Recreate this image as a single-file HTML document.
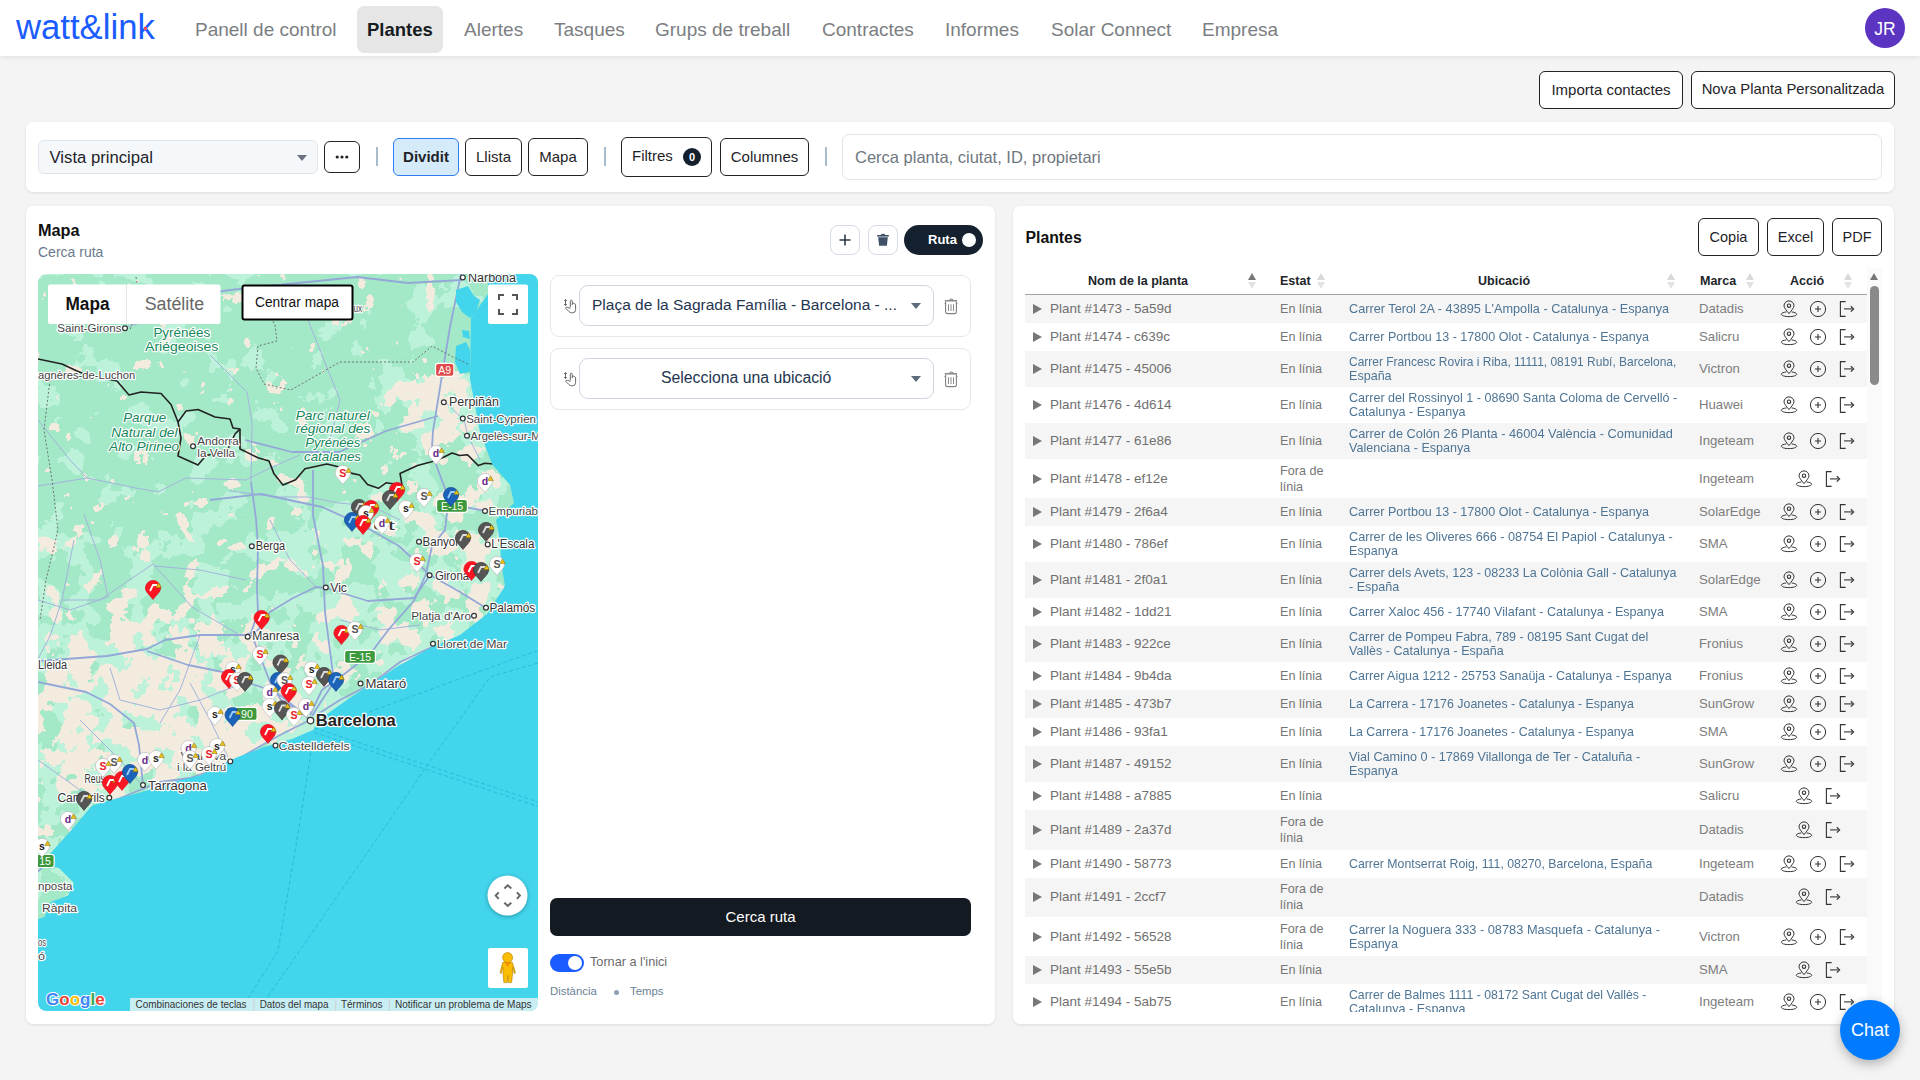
<!DOCTYPE html><html><head><meta charset="utf-8"><style>
*{box-sizing:border-box;margin:0;padding:0}
html,body{width:1920px;height:1080px;overflow:hidden;background:#f4f4f4;font-family:"Liberation Sans",sans-serif;color:#1f2328}
.a{position:absolute;white-space:nowrap}
.hdr{position:absolute;left:0;top:0;width:1920px;height:56px;background:#fff;box-shadow:0 1px 6px rgba(0,0,0,.09)}
.logo{position:absolute;left:16px;top:4.5px;font-size:34.7px;color:#1a5cff;letter-spacing:0px;line-height:44px}
.nav{position:absolute;top:18.7px;font-size:19px;line-height:22px;color:#7b7e82}
.navact{position:absolute;left:357px;top:6px;width:86px;height:47px;background:#e6e6e6;border-radius:7px}
.avatar{position:absolute;left:1865px;top:8px;width:40px;height:40px;border-radius:50%;background:#5b34c2;color:#fff;font-size:17.5px;text-align:center;line-height:42px}
.btn{position:absolute;border:1.3px solid #1f2328;border-radius:6px;background:#fff;font-size:15px;color:#1f2328;text-align:center}
.card{position:absolute;background:#fff;border-radius:7px;box-shadow:0 1px 3px rgba(0,0,0,.10)}
.sep{position:absolute;width:1.5px;height:19px;background:#a9bccb;top:147px}
</style></head><body><div class="hdr">
<div class="logo">watt&amp;link</div>
<div style="position:absolute;left:143.5px;top:26.5px;width:3px;height:3px;background:#ff4d5e"></div>
<div class="navact"></div>
<div class="nav" style="left:195px">Panell de control</div>
<div class="nav" style="left:367px;color:#161b20;font-weight:bold;font-size:18.5px">Plantes</div>
<div class="nav" style="left:464px">Alertes</div>
<div class="nav" style="left:554px">Tasques</div>
<div class="nav" style="left:655px">Grups de treball</div>
<div class="nav" style="left:822px">Contractes</div>
<div class="nav" style="left:945px">Informes</div>
<div class="nav" style="left:1051px">Solar Connect</div>
<div class="nav" style="left:1202px">Empresa</div>
<div class="avatar">JR</div>
</div>
<div class="btn" style="left:1539px;top:71px;width:144px;height:38px;line-height:35px">Importa contactes</div>
<div class="btn" style="left:1691px;top:71px;width:204px;height:38px;line-height:35px;font-size:14.8px">Nova Planta Personalitzada</div>
<div class="card" style="left:26px;top:122px;width:1868px;height:70px"></div>
<div class="a" style="left:38px;top:140px;width:280px;height:34px;background:#f5f8fb;border:1px solid #e2e6ea;border-radius:6px"></div>
<div class="a" style="left:49.5px;top:149px;font-size:16.7px;line-height:18px;color:#1f2328">Vista principal</div>
<div class="a" style="left:297px;top:155px;width:0;height:0;border-left:5px solid transparent;border-right:5px solid transparent;border-top:6px solid #6b7280"></div>
<div class="btn" style="left:324px;top:141px;width:36px;height:32px"></div>
<svg class="a" style="left:324px;top:141px" width="36" height="32"><circle cx="13.2" cy="16" r="1.6" fill="#1f2328"/><circle cx="18" cy="16" r="1.6" fill="#1f2328"/><circle cx="22.8" cy="16" r="1.6" fill="#1f2328"/></svg>
<div class="sep" style="left:376px"></div>
<div class="btn" style="left:393px;top:138px;width:66px;height:38px;line-height:35px;background:#d5ebfa;border-color:#2e7cf6;font-weight:bold;font-size:15px">Dividit</div>
<div class="btn" style="left:465px;top:138px;width:57px;height:38px;line-height:35px">Llista</div>
<div class="btn" style="left:528px;top:138px;width:60px;height:38px;line-height:35px">Mapa</div>
<div class="sep" style="left:604px"></div>
<div class="btn" style="left:621px;top:137px;width:91px;height:40px;line-height:36px;text-align:left;padding-left:10px">Filtres</div>
<div class="a" style="left:683px;top:148px;width:18px;height:18px;border-radius:50%;background:#14202e;color:#fff;font-size:11px;font-weight:bold;text-align:center;line-height:18px">0</div>
<div class="btn" style="left:720px;top:138px;width:89px;height:38px;line-height:35px">Columnes</div>
<div class="sep" style="left:825px"></div>
<div class="a" style="left:842px;top:134px;width:1040px;height:46px;border:1px solid #e3e5e8;border-radius:7px;background:#fff"></div>
<div class="a" style="left:855px;top:148px;font-size:16.5px;line-height:18px;color:#6f7780">Cerca planta, ciutat, ID, propietari</div>
<div class="card" style="left:26px;top:206px;width:969px;height:818px"></div>
<div class="a" style="left:38px;top:221px;font-size:16.3px;font-weight:bold;line-height:18px;color:#111">Mapa</div>
<div class="a" style="left:38px;top:244px;font-size:14px;line-height:16px;color:#6b7b8c">Cerca ruta</div>
<div class="a" style="left:830px;top:225px;width:30px;height:30px;border:1px solid #d3dbe6;border-radius:8px"></div>
<svg class="a" style="left:830px;top:225px" width="30" height="30"><path d="M15 9.5v11M9.5 15h11" stroke="#2b3a4a" stroke-width="1.6"/></svg>
<div class="a" style="left:868px;top:225px;width:30px;height:30px;border:1px solid #d3dbe6;border-radius:8px"></div>
<svg class="a" style="left:868px;top:225px" width="30" height="30"><path d="M9.2 10.8h11.6" stroke="#3f5068" stroke-width="1.6"/><path d="M13 10.5q2-2 4 0" stroke="#3f5068" stroke-width="1.4" fill="none"/><path d="M10.2 12.2h9.6l-0.9 8.6h-7.8z" fill="#3f5068"/></svg>
<div class="a" style="left:904px;top:225px;width:79px;height:30px;border-radius:15px;background:#15212f"></div>
<div class="a" style="left:928px;top:232px;font-size:13px;font-weight:bold;line-height:16px;color:#fff">Ruta</div>
<div class="a" style="left:962px;top:233px;width:14px;height:14px;border-radius:50%;background:#fff"></div>
<div class="a" style="left:550px;top:275px;width:421px;height:62px;border:1px solid #e4e8ee;border-radius:9px;background:#fff"></div>
<div class="a" style="left:579px;top:285px;width:355px;height:41px;border:1px solid #cfd6df;border-radius:9px;background:#fff"></div>
<div class="a" style="left:592px;top:296px;font-size:15.5px;line-height:18px;color:#1e3550">Plaça de la Sagrada Família - Barcelona - ...</div>
<div class="a" style="left:911px;top:303px;width:0;height:0;border-left:5.5px solid transparent;border-right:5.5px solid transparent;border-top:6px solid #5d6b7a"></div>
<svg class="a" style="left:555px;top:290px" width="35" height="30" viewBox="555 290 35 30"><path d="M565.5,299.8V305.3M564.2,301L565.5,299.5L566.8,301M564.2,304.1L565.5,305.6L566.8,304.1" stroke="#666" stroke-width="1" fill="none"/><path d="M570.3,307.5V301.3Q570.3,300.2 571.3,300.2Q572.3,300.2 572.3,301.3V305M572.3,304.2Q572.5,303.1 573.6,303.2L574.6,303.6Q575.6,304 575.6,305V309.6Q575.6,312.9 572.3,312.9Q570,312.9 568.7,311.3L566,308.6Q565.4,307.8 566.2,307.3Q567,306.9 570.3,308.4" stroke="#666" stroke-width="1" fill="none" stroke-linejoin="round"/></svg>
<svg class="a" style="left:940px;top:295px" width="22" height="22" viewBox="940 295 22 22"><path d="M944.8,300.8H957" stroke="#808080" stroke-width="1.4"/><path d="M949.6,300.3Q951.3,297.8 953,300.3" stroke="#808080" stroke-width="1.1" fill="none"/><path d="M945.6,301.5V311.4Q945.6,313.6 947.8,313.6H954.2Q956.4,313.6 956.4,311.4V301.5" stroke="#808080" stroke-width="1.1" fill="none"/><path d="M944.4,303.6H945.6M956.4,303.6H957.6" stroke="#808080" stroke-width="0.9"/><path d="M948.5,304.2V311M951,304.2V311M953.5,304.2V311" stroke="#8a8a8a" stroke-width="1"/></svg>
<div class="a" style="left:550px;top:348px;width:421px;height:62px;border:1px solid #e4e8ee;border-radius:9px;background:#fff"></div>
<div class="a" style="left:579px;top:358px;width:355px;height:41px;border:1px solid #cfd6df;border-radius:9px;background:#fff"></div>
<div class="a" style="left:661px;top:369px;font-size:15.8px;line-height:18px;color:#1e3550">Selecciona una ubicació</div>
<div class="a" style="left:911px;top:376px;width:0;height:0;border-left:5.5px solid transparent;border-right:5.5px solid transparent;border-top:6px solid #5d6b7a"></div>
<svg class="a" style="left:555px;top:363px" width="35" height="30" viewBox="555 290 35 30"><path d="M565.5,299.8V305.3M564.2,301L565.5,299.5L566.8,301M564.2,304.1L565.5,305.6L566.8,304.1" stroke="#666" stroke-width="1" fill="none"/><path d="M570.3,307.5V301.3Q570.3,300.2 571.3,300.2Q572.3,300.2 572.3,301.3V305M572.3,304.2Q572.5,303.1 573.6,303.2L574.6,303.6Q575.6,304 575.6,305V309.6Q575.6,312.9 572.3,312.9Q570,312.9 568.7,311.3L566,308.6Q565.4,307.8 566.2,307.3Q567,306.9 570.3,308.4" stroke="#666" stroke-width="1" fill="none" stroke-linejoin="round"/></svg>
<svg class="a" style="left:940px;top:368px" width="22" height="22" viewBox="940 295 22 22"><path d="M944.8,300.8H957" stroke="#808080" stroke-width="1.4"/><path d="M949.6,300.3Q951.3,297.8 953,300.3" stroke="#808080" stroke-width="1.1" fill="none"/><path d="M945.6,301.5V311.4Q945.6,313.6 947.8,313.6H954.2Q956.4,313.6 956.4,311.4V301.5" stroke="#808080" stroke-width="1.1" fill="none"/><path d="M944.4,303.6H945.6M956.4,303.6H957.6" stroke="#808080" stroke-width="0.9"/><path d="M948.5,304.2V311M951,304.2V311M953.5,304.2V311" stroke="#8a8a8a" stroke-width="1"/></svg>
<div class="a" style="left:550px;top:898px;width:421px;height:38px;border-radius:7px;background:#141a21;color:#fff;text-align:center;font-size:15px;line-height:38px">Cerca ruta</div>
<div class="a" style="left:550px;top:954px;width:34px;height:18px;border-radius:9px;background:#1a5cff"></div>
<div class="a" style="left:567.5px;top:956px;width:14px;height:14px;border-radius:50%;background:#fff"></div>
<div class="a" style="left:590px;top:955px;font-size:12.7px;line-height:15px;color:#6b6b6b">Tornar a l'inici</div>
<div class="a" style="left:550px;top:984px;font-size:11.4px;line-height:14px;color:#6a7f95">Distància</div>
<div class="a" style="left:614px;top:990px;width:5px;height:5px;border-radius:50%;background:#8ea0b4"></div>
<div class="a" style="left:630px;top:984px;font-size:11.4px;line-height:14px;color:#6a7f95">Temps</div>
<svg class="a" style="left:38px;top:274px;border-radius:8px" width="500" height="737" viewBox="38 274 500 737" font-family="Liberation Sans, sans-serif">
<defs><clipPath id="mc"><rect x="38" y="274" width="500" height="737" rx="8"/></clipPath></defs><g clip-path="url(#mc)">
<rect x="38" y="274" width="500" height="737" fill="#bdf2da"/>
<defs>
<filter id="fm" x="38" y="274" width="500" height="737" filterUnits="userSpaceOnUse" color-interpolation-filters="sRGB"><feGaussianBlur in="SourceGraphic" stdDeviation="18" result="bias"/><feTurbulence type="fractalNoise" baseFrequency="0.032" numOctaves="4" seed="4" result="n0"/><feColorMatrix in="n0" type="matrix" values="1 0 0 0 0  1 0 0 0 0  1 0 0 0 0  0 0 0 0 1" result="n"/><feComposite in="n" in2="bias" operator="arithmetic" k1="0" k2="0.6" k3="0.4" k4="0" result="sum"/><feColorMatrix in="sum" type="matrix" values="0 0 0 0 0  0 0 0 0 0  0 0 0 0 0  1 0 0 0 0" result="a"/><feComponentTransfer in="a" result="m"><feFuncA type="discrete" tableValues="0 0 0 0 0 1 1 1 1 1"/></feComponentTransfer><feFlood flood-color="#a3e8c7"/><feComposite in2="m" operator="in"/></filter>
<filter id="fb" x="38" y="274" width="500" height="737" filterUnits="userSpaceOnUse" color-interpolation-filters="sRGB"><feGaussianBlur in="SourceGraphic" stdDeviation="18" result="bias"/><feTurbulence type="fractalNoise" baseFrequency="0.045" numOctaves="4" seed="9" result="n0"/><feColorMatrix in="n0" type="matrix" values="1 0 0 0 0  1 0 0 0 0  1 0 0 0 0  0 0 0 0 1" result="n"/><feComposite in="n" in2="bias" operator="arithmetic" k1="0" k2="0.6" k3="0.4" k4="0" result="sum"/><feColorMatrix in="sum" type="matrix" values="0 0 0 0 0  0 0 0 0 0  0 0 0 0 0  1 0 0 0 0" result="a"/><feComponentTransfer in="a" result="m"><feFuncA type="discrete" tableValues="0 0 0 0 0 1 1 1 1 1"/></feComponentTransfer><feFlood flood-color="#f3ecde"/><feComposite in2="m" operator="in"/></filter>
</defs>
<g filter="url(#fm)"><rect x="0" y="0" width="600" height="1100" fill="rgb(119,119,119)"/><rect x="0" y="260" width="600" height="240" fill="rgb(173,173,173)"/><rect x="38" y="460" width="230" height="140" fill="rgb(158,158,158)"/><ellipse cx="150" cy="720" rx="110" ry="70" fill="rgb(81,81,81)"/><ellipse cx="440" cy="410" rx="50" ry="35" fill="rgb(76,76,76)"/><ellipse cx="300" cy="690" rx="60" ry="40" fill="rgb(89,89,89)"/></g>
<g filter="url(#fb)"><rect x="0" y="0" width="600" height="1100" fill="rgb(45,45,45)"/><rect x="0" y="470" width="600" height="600" fill="rgb(61,61,61)"/><rect x="38" y="640" width="250" height="150" fill="rgb(153,153,153)"/><rect x="100" y="595" width="130" height="50" fill="rgb(122,122,122)"/><rect x="255" y="690" width="60" height="40" fill="rgb(122,122,122)"/><rect x="310" y="565" width="50" height="50" fill="rgb(114,114,114)"/><rect x="400" y="555" width="80" height="70" fill="rgb(127,127,127)"/><rect x="420" y="480" width="85" height="80" fill="rgb(140,140,140)"/><rect x="395" y="370" width="90" height="80" fill="rgb(163,163,163)"/><rect x="340" y="600" width="130" height="90" fill="rgb(107,107,107)"/></g>
<polyline points="158.0,492.0 186.0,478.0 246.0,480.0 270.0,468.0 300.0,455.0" fill="none" stroke="#a3b4dc" stroke-width="1" stroke-linejoin="round"/>
<polyline points="154.0,566.0 200.0,570.0 246.0,580.0" fill="none" stroke="#a3b4dc" stroke-width="1" stroke-linejoin="round"/>
<polyline points="74.0,540.0 62.0,600.0 50.0,636.0 38.0,659.0" fill="none" stroke="#a3b4dc" stroke-width="1" stroke-linejoin="round"/>
<polyline points="153.0,564.0 173.0,586.0 192.0,607.0 238.0,634.0" fill="none" stroke="#a3b4dc" stroke-width="1" stroke-linejoin="round"/>
<polyline points="38.0,486.0 87.0,478.0 136.0,488.0 158.0,492.0" fill="none" stroke="#a3b4dc" stroke-width="1" stroke-linejoin="round"/>
<polyline points="230.0,491.0 277.0,497.0 308.0,497.0 339.0,503.0 371.0,506.0 400.0,520.0" fill="none" stroke="#a3b4dc" stroke-width="1" stroke-linejoin="round"/>
<polyline points="142.0,785.0 120.0,760.0 100.0,740.0 80.0,720.0" fill="none" stroke="#a3b4dc" stroke-width="1" stroke-linejoin="round"/>
<polyline points="60.0,300.0 100.0,330.0 124.0,328.0 150.0,320.0 200.0,300.0" fill="none" stroke="#a3b4dc" stroke-width="1" stroke-linejoin="round"/>
<polyline points="38.0,420.0 70.0,460.0 87.0,478.0" fill="none" stroke="#a3b4dc" stroke-width="1" stroke-linejoin="round"/>
<polyline points="110.0,668.0 120.0,700.0" fill="none" stroke="#a3b4dc" stroke-width="1" stroke-linejoin="round"/>
<polyline points="190.0,683.0 210.0,720.0 228.0,757.0" fill="none" stroke="#a3b4dc" stroke-width="1" stroke-linejoin="round"/>
<polyline points="38.0,760.0 80.0,790.0 103.0,802.0" fill="none" stroke="#a3b4dc" stroke-width="1" stroke-linejoin="round"/>
<polyline points="300.0,300.0 320.0,350.0 340.0,400.0 330.0,440.0" fill="none" stroke="#a3b4dc" stroke-width="1" stroke-linejoin="round"/>
<polyline points="62.0,600.0 100.0,600.0 153.0,564.0" fill="none" stroke="#a3b4dc" stroke-width="1" stroke-linejoin="round"/>
<polyline points="200.0,635.0 180.0,690.0 160.0,723.0" fill="none" stroke="#a3b4dc" stroke-width="1" stroke-linejoin="round"/>
<polyline points="84.0,514.0 100.0,560.0 108.0,597.0" fill="none" stroke="#a3b4dc" stroke-width="1" stroke-linejoin="round"/>
<polyline points="210.0,355.0 247.0,392.0 252.0,423.0 251.0,482.0" fill="none" stroke="#a3b4dc" stroke-width="1" stroke-linejoin="round"/>
<polyline points="443.0,400.0 464.0,420.0 468.0,436.0 480.0,460.0" fill="none" stroke="#a3b4dc" stroke-width="1" stroke-linejoin="round"/>
<polyline points="340.0,620.0 380.0,630.0 420.0,625.0" fill="none" stroke="#a3b4dc" stroke-width="1" stroke-linejoin="round"/>
<polyline points="270.0,520.0 290.0,560.0 316.0,587.0" fill="none" stroke="#a3b4dc" stroke-width="1" stroke-linejoin="round"/>
<polyline points="38.0,600.0 70.0,610.0 108.0,597.0" fill="none" stroke="#a3b4dc" stroke-width="1" stroke-linejoin="round"/>
<polyline points="120.0,700.0 160.0,710.0 200.0,700.0 246.0,682.0" fill="none" stroke="#a3b4dc" stroke-width="1" stroke-linejoin="round"/>
<polyline points="461.0,274.0 450.0,327.0 443.0,369.0 438.0,400.0 433.0,431.0 432.0,447.0 435.0,462.0 446.0,491.0 448.0,504.0 445.0,530.0 432.0,546.0 426.0,574.0 414.0,601.0 389.0,629.0 371.0,653.0 347.0,672.0 322.0,690.0 310.0,715.0" fill="none" stroke="#94a8d8" stroke-width="1.8" stroke-linejoin="round"/>
<polyline points="310.0,720.0 280.0,735.0 250.0,752.0 226.0,766.0 190.0,778.0 160.0,782.0 140.0,790.0 118.0,799.0 95.0,810.0 75.0,830.0 55.0,852.0 38.0,872.0" fill="none" stroke="#94a8d8" stroke-width="1.8" stroke-linejoin="round"/>
<polyline points="251.0,482.0 256.0,519.0 258.0,547.0 257.0,589.0 258.0,612.0 251.0,633.0 258.0,651.0 270.0,682.0 281.0,700.0 301.0,712.0 310.0,720.0" fill="none" stroke="#94a8d8" stroke-width="1.8" stroke-linejoin="round"/>
<polyline points="38.0,661.0 107.0,656.0 147.0,649.0 165.0,640.0 200.0,635.0 246.0,635.0 258.0,630.0 270.0,612.0 293.0,598.0 316.0,587.0 326.0,588.0 368.0,601.0 414.0,598.0 430.0,575.0" fill="none" stroke="#94a8d8" stroke-width="1.8" stroke-linejoin="round"/>
<polyline points="147.0,651.0 188.0,665.0 223.0,672.0 246.0,682.0 276.0,692.0 301.0,712.0" fill="none" stroke="#94a8d8" stroke-width="1.8" stroke-linejoin="round"/>
<polyline points="313.0,470.0 313.0,515.0 323.0,566.0 325.0,612.0 334.0,682.0 322.0,700.0 312.0,716.0" fill="none" stroke="#94a8d8" stroke-width="1.8" stroke-linejoin="round"/>
<polyline points="432.0,647.0 400.0,662.0 371.0,684.0 340.0,700.0 318.0,714.0" fill="none" stroke="#94a8d8" stroke-width="1.8" stroke-linejoin="round"/>
<polyline points="38.0,682.0 86.0,692.0 110.0,704.0 134.0,723.0 139.0,745.0 143.0,785.0" fill="none" stroke="#94a8d8" stroke-width="1.8" stroke-linejoin="round"/>
<polyline points="438.0,416.0 386.0,431.0 339.0,452.0 292.0,452.0 245.0,440.0" fill="none" stroke="#94a8d8" stroke-width="1.8" stroke-linejoin="round"/>
<polyline points="462.0,280.0 408.0,283.0 357.0,277.0 288.0,284.0 230.0,290.0 160.0,300.0" fill="none" stroke="#94a8d8" stroke-width="1.8" stroke-linejoin="round"/>
<polyline points="430.0,575.0 399.0,546.0 362.0,525.0 322.0,507.0 261.0,494.0 210.0,500.0" fill="none" stroke="#94a8d8" stroke-width="1.8" stroke-linejoin="round"/>
<polyline points="430.0,575.0 460.0,592.0 486.0,608.0" fill="none" stroke="#94a8d8" stroke-width="1.8" stroke-linejoin="round"/>
<polyline points="448.0,504.0 486.0,511.0" fill="none" stroke="#94a8d8" stroke-width="1.8" stroke-linejoin="round"/>
<polyline points="38.0,359.0 62.0,364.0 77.0,371.0 87.0,375.0 117.0,381.0 129.0,395.0 141.0,392.0 161.0,393.5 171.0,404.5 178.0,422.0 186.0,411.0 198.0,409.5 215.0,417.0 230.0,419.0 233.0,428.0 240.0,429.0 240.0,449.0 245.6,451.6 258.0,457.8 269.0,461.0 273.8,473.4 283.0,485.0 295.6,479.7 305.0,468.8 326.9,464.0 339.4,467.0 352.0,473.4 359.7,475.0 367.5,484.4 378.4,488.3 386.0,482.8 402.0,485.0 400.0,473.4 417.5,465.6 431.6,461.7 442.5,457.8 452.0,453.0 459.7,455.5 467.5,454.7 478.4,465.6 484.7,463.3 494.0,464.0" fill="none" stroke="#222" stroke-width="1.6" stroke-linejoin="round"/>
<polyline points="178.0,422.0 181.0,438.0 178.0,456.0 198.0,465.0 205.5,456.0 228.0,449.0 235.0,434.0 240.0,429.0" fill="none" stroke="#222" stroke-width="1.6" stroke-linejoin="round"/>
<polygon points="538.0,274.0 488.0,274.0 488.0,294.0 471.0,318.0 470.0,379.0 480.0,432.0 492.0,464.0 510.0,485.0 514.0,503.0 496.0,520.0 500.0,541.0 501.0,562.0 505.0,586.0 487.0,614.0 460.0,635.0 432.0,647.0 399.0,665.5 371.0,684.0 344.0,702.0 322.0,717.5 313.0,730.0 292.0,739.0 261.0,748.0 230.5,760.0 200.0,775.5 181.0,780.0 138.5,793.0 103.0,802.0 91.5,806.0 74.0,827.0 50.8,853.0 46.6,865.6 59.0,868.0 74.0,883.0 68.0,895.5 50.8,902.0 44.4,917.0 38.0,919.0 38.0,1011.0 538.0,1011.0" fill="#42d5ec"/>
<path d="M456,290 L468,286 L474,296 L480,300 L476,312 L470,318 L462,312 L456,302Z M462,330 L469,331 L470,339 L463,337Z M456,346 L466,342 L470,350 L470,372 L460,374 L455,362Z" fill="#42d5ec"/>
<polyline points="258,346 256,368 264,384 291,390 340,362 413,362 432,346 453,357 468,364" fill="none" stroke="#666" stroke-width="0.9" stroke-dasharray="2,2"/>
<polyline points="262,300 275,325 277,341 258,346" fill="none" stroke="#666" stroke-width="0.9" stroke-dasharray="2,2"/>
<polyline points="136,277 140,300 130,330" fill="none" stroke="#666" stroke-width="0.9" stroke-dasharray="2,2"/>
<polyline points="50,380 44,430 52,480 58,530 46,580 40,620" fill="none" stroke="#666" stroke-width="0.9" stroke-dasharray="2,2"/>
<path d="M369,712 L502.6,663 L538,650.6 M538,663 L490,677 L428.7,763 L383,830 L258,1011 M310.9,752.6 L298.6,830 L278,951 L240,1011 M314.4,728 L538,801.9 M314.4,732.5 L538,806.4" stroke="#22bfdc" stroke-width="1" stroke-dasharray="4,2.5" fill="none"/>
<text x="468" y="281.7" font-size="12.5" fill="#333" textLength="48" lengthAdjust="spacingAndGlyphs" style="font-weight:normal;paint-order:stroke;stroke:#fff;stroke-width:2.3px;stroke-linejoin:round">Narbona</text>
<text x="57.3" y="331.7" font-size="11.5" fill="#444" textLength="64.2" lengthAdjust="spacingAndGlyphs" style="font-weight:normal;paint-order:stroke;stroke:#fff;stroke-width:2.3px;stroke-linejoin:round">Saint-Girons</text>
<text x="153.4" y="336.8" font-size="13.5" fill="#15885b" textLength="56.8" lengthAdjust="spacingAndGlyphs" style="font-weight:normal;paint-order:stroke;stroke:#fff;stroke-width:2.3px;stroke-linejoin:round">Pyrénées</text>
<text x="145.1" y="350.6" font-size="13.5" fill="#15885b" textLength="73.3" lengthAdjust="spacingAndGlyphs" style="font-weight:normal;paint-order:stroke;stroke:#fff;stroke-width:2.3px;stroke-linejoin:round">Ariégeoises</text>
<text x="38" y="379.4" font-size="11.5" fill="#444" textLength="97.3" lengthAdjust="spacingAndGlyphs" style="font-weight:normal;paint-order:stroke;stroke:#fff;stroke-width:2.3px;stroke-linejoin:round">agnères-de-Luchon</text>
<text x="123.2" y="422.4" font-size="13.5" fill="#15885b" textLength="43.1" lengthAdjust="spacingAndGlyphs" style="font-style:italic;font-weight:normal;paint-order:stroke;stroke:#fff;stroke-width:2.3px;stroke-linejoin:round">Parque</text>
<text x="111.2" y="436.7" font-size="13.5" fill="#15885b" textLength="66.3" lengthAdjust="spacingAndGlyphs" style="font-style:italic;font-weight:normal;paint-order:stroke;stroke:#fff;stroke-width:2.3px;stroke-linejoin:round">Natural del</text>
<text x="109" y="450.5" font-size="13.5" fill="#15885b" textLength="70.2" lengthAdjust="spacingAndGlyphs" style="font-style:italic;font-weight:normal;paint-order:stroke;stroke:#fff;stroke-width:2.3px;stroke-linejoin:round">Alto Pirineo</text>
<text x="197.3" y="444.5" font-size="11.5" fill="#444" textLength="41.3" lengthAdjust="spacingAndGlyphs" style="font-weight:normal;paint-order:stroke;stroke:#fff;stroke-width:2.3px;stroke-linejoin:round">Andorra</text>
<text x="197.3" y="456.5" font-size="11.5" fill="#444" textLength="37.7" lengthAdjust="spacingAndGlyphs" style="font-weight:normal;paint-order:stroke;stroke:#fff;stroke-width:2.3px;stroke-linejoin:round">la Vella</text>
<text x="295.7" y="419.5" font-size="13.5" fill="#15885b" textLength="74.1" lengthAdjust="spacingAndGlyphs" style="font-style:italic;font-weight:normal;paint-order:stroke;stroke:#fff;stroke-width:2.3px;stroke-linejoin:round">Parc naturel</text>
<text x="295.7" y="433.3" font-size="13.5" fill="#15885b" textLength="74.6" lengthAdjust="spacingAndGlyphs" style="font-style:italic;font-weight:normal;paint-order:stroke;stroke:#fff;stroke-width:2.3px;stroke-linejoin:round">régional des</text>
<text x="305.2" y="447" font-size="13.5" fill="#15885b" textLength="55.1" lengthAdjust="spacingAndGlyphs" style="font-style:italic;font-weight:normal;paint-order:stroke;stroke:#fff;stroke-width:2.3px;stroke-linejoin:round">Pyrénées</text>
<text x="304" y="460.8" font-size="13.5" fill="#15885b" textLength="57" lengthAdjust="spacingAndGlyphs" style="font-style:italic;font-weight:normal;paint-order:stroke;stroke:#fff;stroke-width:2.3px;stroke-linejoin:round">catalanes</text>
<text x="353.4" y="311.5" font-size="11.5" fill="#444" textLength="8.6" lengthAdjust="spacingAndGlyphs" style="font-weight:normal;paint-order:stroke;stroke:#fff;stroke-width:2.3px;stroke-linejoin:round">ux</text>
<text x="449" y="406.2" font-size="12.5" fill="#333" textLength="49.9" lengthAdjust="spacingAndGlyphs" style="font-weight:normal;paint-order:stroke;stroke:#fff;stroke-width:2.3px;stroke-linejoin:round">Perpiñán</text>
<text x="466.2" y="423" font-size="11.5" fill="#444" textLength="69.8" lengthAdjust="spacingAndGlyphs" style="font-weight:normal;paint-order:stroke;stroke:#fff;stroke-width:2.3px;stroke-linejoin:round">Saint-Cyprien</text>
<text x="470.5" y="440.1" font-size="11.5" fill="#444" textLength="70" lengthAdjust="spacingAndGlyphs" style="font-weight:normal;paint-order:stroke;stroke:#fff;stroke-width:2.3px;stroke-linejoin:round">Argelès-sur-M</text>
<text x="488.6" y="514.5" font-size="11.5" fill="#444" textLength="49.4" lengthAdjust="spacingAndGlyphs" style="font-weight:normal;paint-order:stroke;stroke:#fff;stroke-width:2.3px;stroke-linejoin:round">Empuriab</text>
<text x="255.8" y="549.7" font-size="12" fill="#333" textLength="29.4" lengthAdjust="spacingAndGlyphs" style="font-weight:normal;paint-order:stroke;stroke:#fff;stroke-width:2.3px;stroke-linejoin:round">Berga</text>
<text x="422.6" y="546.2" font-size="12" fill="#333" textLength="35.2" lengthAdjust="spacingAndGlyphs" style="font-weight:normal;paint-order:stroke;stroke:#fff;stroke-width:2.3px;stroke-linejoin:round">Banyol</text>
<text x="491.2" y="548" font-size="12" fill="#333" textLength="43.1" lengthAdjust="spacingAndGlyphs" style="font-weight:normal;paint-order:stroke;stroke:#fff;stroke-width:2.3px;stroke-linejoin:round">L'Escala</text>
<text x="434.9" y="579.6" font-size="13" fill="#333" textLength="34.3" lengthAdjust="spacingAndGlyphs" style="font-weight:normal;paint-order:stroke;stroke:#fff;stroke-width:2.3px;stroke-linejoin:round">Girona</text>
<text x="373" y="530.4" font-size="12" fill="#333" textLength="22" lengthAdjust="spacingAndGlyphs" style="font-weight:normal;paint-order:stroke;stroke:#fff;stroke-width:2.3px;stroke-linejoin:round">ot</text>
<text x="330.2" y="592" font-size="12" fill="#333" textLength="16.8" lengthAdjust="spacingAndGlyphs" style="font-weight:normal;paint-order:stroke;stroke:#fff;stroke-width:2.3px;stroke-linejoin:round">Vic</text>
<text x="489.4" y="612.2" font-size="12" fill="#333" textLength="45.8" lengthAdjust="spacingAndGlyphs" style="font-weight:normal;paint-order:stroke;stroke:#fff;stroke-width:2.3px;stroke-linejoin:round">Palamós</text>
<text x="411.2" y="620" font-size="11.5" fill="#444" textLength="59.8" lengthAdjust="spacingAndGlyphs" style="font-weight:normal;paint-order:stroke;stroke:#fff;stroke-width:2.3px;stroke-linejoin:round">Platja d'Aro</text>
<text x="252.3" y="640.3" font-size="12" fill="#333" textLength="47" lengthAdjust="spacingAndGlyphs" style="font-weight:normal;paint-order:stroke;stroke:#fff;stroke-width:2.3px;stroke-linejoin:round">Manresa</text>
<text x="436.7" y="647.9" font-size="11.5" fill="#444" textLength="70.3" lengthAdjust="spacingAndGlyphs" style="font-weight:normal;paint-order:stroke;stroke:#fff;stroke-width:2.3px;stroke-linejoin:round">Lloret de Mar</text>
<text x="38" y="669" font-size="12" fill="#333" textLength="29" lengthAdjust="spacingAndGlyphs" style="font-weight:normal;paint-order:stroke;stroke:#fff;stroke-width:2.3px;stroke-linejoin:round">Lleida</text>
<text x="365.4" y="687.9" font-size="12.5" fill="#333" textLength="40.8" lengthAdjust="spacingAndGlyphs" style="font-weight:normal;paint-order:stroke;stroke:#fff;stroke-width:2.3px;stroke-linejoin:round">Mataró</text>
<text x="315.8" y="725.9" font-size="16.8" fill="#222" textLength="79.9" lengthAdjust="spacingAndGlyphs" style="font-weight:bold;paint-order:stroke;stroke:#fff;stroke-width:2.3px;stroke-linejoin:round">Barcelona</text>
<text x="278.6" y="750" font-size="11.5" fill="#444" textLength="71" lengthAdjust="spacingAndGlyphs" style="font-weight:normal;paint-order:stroke;stroke:#fff;stroke-width:2.3px;stroke-linejoin:round">Castelldefels</text>
<text x="180.5" y="759.6" font-size="11.5" fill="#444" textLength="45.7" lengthAdjust="spacingAndGlyphs" style="font-weight:normal;paint-order:stroke;stroke:#fff;stroke-width:2.3px;stroke-linejoin:round">Vilanova</text>
<text x="177" y="771" font-size="11.5" fill="#444" textLength="49.2" lengthAdjust="spacingAndGlyphs" style="font-weight:normal;paint-order:stroke;stroke:#fff;stroke-width:2.3px;stroke-linejoin:round">i la Geltrú</text>
<text x="84.6" y="782.5" font-size="12.5" fill="#333" textLength="20.3" lengthAdjust="spacingAndGlyphs" style="font-weight:normal;paint-order:stroke;stroke:#fff;stroke-width:2.3px;stroke-linejoin:round">Reus</text>
<text x="148" y="789.5" font-size="13" fill="#333" textLength="58.9" lengthAdjust="spacingAndGlyphs" style="font-weight:normal;paint-order:stroke;stroke:#fff;stroke-width:2.3px;stroke-linejoin:round">Tarragona</text>
<text x="57.4" y="801.9" font-size="12" fill="#333" textLength="47.5" lengthAdjust="spacingAndGlyphs" style="font-weight:normal;paint-order:stroke;stroke:#fff;stroke-width:2.3px;stroke-linejoin:round">Cambrils</text>
<text x="38" y="889.5" font-size="11.5" fill="#444" textLength="34.5" lengthAdjust="spacingAndGlyphs" style="font-weight:normal;paint-order:stroke;stroke:#fff;stroke-width:2.3px;stroke-linejoin:round">nposta</text>
<text x="42" y="911.5" font-size="11.5" fill="#444" textLength="35" lengthAdjust="spacingAndGlyphs" style="font-weight:normal;paint-order:stroke;stroke:#fff;stroke-width:2.3px;stroke-linejoin:round">Ràpita</text>
<text x="38" y="946" font-size="11" fill="#444" textLength="8" lengthAdjust="spacingAndGlyphs" style="font-weight:normal;paint-order:stroke;stroke:#fff;stroke-width:2.3px;stroke-linejoin:round">os</text>
<text x="38" y="960" font-size="11" fill="#444" textLength="7" lengthAdjust="spacingAndGlyphs" style="font-weight:normal;paint-order:stroke;stroke:#fff;stroke-width:2.3px;stroke-linejoin:round">ó</text>
<circle cx="462.8" cy="277.4" r="2.4" fill="#fff" stroke="#333" stroke-width="1.2"/>
<circle cx="125" cy="328.2" r="2.4" fill="#fff" stroke="#333" stroke-width="1.2"/>
<circle cx="193" cy="446.2" r="2.4" fill="#fff" stroke="#333" stroke-width="1.2"/>
<circle cx="443.8" cy="402.3" r="2.4" fill="#fff" stroke="#333" stroke-width="1.2"/>
<circle cx="462.8" cy="418.6" r="2.4" fill="#fff" stroke="#333" stroke-width="1.2"/>
<circle cx="467" cy="435.8" r="2.4" fill="#fff" stroke="#333" stroke-width="1.2"/>
<circle cx="485" cy="511" r="2.4" fill="#fff" stroke="#333" stroke-width="1.2"/>
<circle cx="251.8" cy="546.2" r="2.4" fill="#fff" stroke="#333" stroke-width="1.2"/>
<circle cx="419" cy="541.8" r="2.4" fill="#fff" stroke="#333" stroke-width="1.2"/>
<circle cx="487.7" cy="544.4" r="2.4" fill="#fff" stroke="#333" stroke-width="1.2"/>
<circle cx="429.6" cy="575.2" r="2.4" fill="#fff" stroke="#333" stroke-width="1.2"/>
<circle cx="325.8" cy="587.5" r="2.4" fill="#fff" stroke="#333" stroke-width="1.2"/>
<circle cx="486" cy="607.8" r="2.4" fill="#fff" stroke="#333" stroke-width="1.2"/>
<circle cx="474" cy="615.7" r="2.4" fill="#fff" stroke="#333" stroke-width="1.2"/>
<circle cx="247.7" cy="636.8" r="2.4" fill="#fff" stroke="#333" stroke-width="1.2"/>
<circle cx="433" cy="643.8" r="2.4" fill="#fff" stroke="#333" stroke-width="1.2"/>
<circle cx="360.5" cy="683.6" r="2.4" fill="#fff" stroke="#333" stroke-width="1.2"/>
<circle cx="310.5" cy="720.6" r="3.2" fill="#fff" stroke="#333" stroke-width="1.2"/>
<circle cx="275.5" cy="745.6" r="2.4" fill="#fff" stroke="#333" stroke-width="1.2"/>
<circle cx="230.3" cy="761.4" r="2.4" fill="#fff" stroke="#333" stroke-width="1.2"/>
<circle cx="143" cy="785.1" r="2.4" fill="#fff" stroke="#333" stroke-width="1.2"/>
<circle cx="109.3" cy="797.8" r="2.4" fill="#fff" stroke="#333" stroke-width="1.2"/>
<rect x="435.5" y="363.3" width="18.4" height="13" rx="2.5" fill="#e04a4a" stroke="#fff" stroke-width="1.2"/>
<text x="444.7" y="373.8" font-size="10.5" fill="#fff" text-anchor="middle">A9</text>
<rect x="436.6" y="499.3" width="30.8" height="13" rx="2.5" fill="#3c9a3c" stroke="#fff" stroke-width="1.2"/>
<text x="452" y="509.8" font-size="10.5" fill="#fff" text-anchor="middle">E-15</text>
<rect x="344.6" y="650.3" width="30.8" height="13" rx="2.5" fill="#3c9a3c" stroke="#fff" stroke-width="1.2"/>
<text x="360" y="660.8" font-size="10.5" fill="#fff" text-anchor="middle">E-15</text>
<rect x="226.29999999999998" y="707.4" width="30.8" height="13" rx="2.5" fill="#3c9a3c" stroke="#fff" stroke-width="1.2"/>
<text x="241.7" y="717.9" font-size="10.5" fill="#fff" text-anchor="middle">E-90</text>
<rect x="35.8" y="854.5" width="18.4" height="13" rx="2.5" fill="#3c9a3c" stroke="#fff" stroke-width="1.2"/>
<text x="45" y="865" font-size="10.5" fill="#fff" text-anchor="middle">15</text>
<path d="M342.8,484.5 C340.2,480.6 335.2,477.2 335.2,473 A7.6,7.6 0 1 1 350.40000000000003,473 C350.40000000000003,477.2 345.40000000000003,480.6 342.8,484.5Z" fill="#ffffff" stroke="#bbb" stroke-width="0.7"/>
<text x="342.8" y="476.6" font-size="10.5" font-weight="bold" fill="#e8202a" text-anchor="middle">S</text>
<path d="M348.3,468 l2.8,4.6 h-5.6z" fill="#e8c21a" stroke="#8a6d00" stroke-width="0.5"/>
<path d="M436,464.5 C433.4,460.6 428.4,457.2 428.4,453 A7.6,7.6 0 1 1 443.6,453 C443.6,457.2 438.6,460.6 436,464.5Z" fill="#ffffff" stroke="#bbb" stroke-width="0.7"/>
<text x="436" y="456.6" font-size="10.5" font-weight="bold" fill="#6a2a8a" text-anchor="middle">d</text>
<path d="M441.5,448 l2.8,4.6 h-5.6z" fill="#e8c21a" stroke="#8a6d00" stroke-width="0.5"/>
<path d="M397,501.5 C394.4,497.6 389.4,494.2 389.4,490 A7.6,7.6 0 1 1 404.6,490 C404.6,494.2 399.6,497.6 397,501.5Z" fill="#fb1522" stroke="#d80f1c" stroke-width="0.7"/>
<path d="M394,493 L397,487 h4" stroke="#fff" stroke-width="1.8" fill="none"/>
<path d="M402.5,485 l2.8,4.6 h-5.6z" fill="#e8c21a" stroke="#8a6d00" stroke-width="0.5"/>
<path d="M390,509.5 C387.4,505.6 382.4,502.2 382.4,498 A7.6,7.6 0 1 1 397.6,498 C397.6,502.2 392.6,505.6 390,509.5Z" fill="#555555" stroke="#333" stroke-width="0.7"/>
<path d="M387,501 L390,495 h4" stroke="#ddd" stroke-width="1.8" fill="none"/>
<path d="M395.5,493 l2.8,4.6 h-5.6z" fill="#e8c21a" stroke="#8a6d00" stroke-width="0.5"/>
<path d="M359,518.5 C356.4,514.6 351.4,511.2 351.4,507 A7.6,7.6 0 1 1 366.6,507 C366.6,511.2 361.6,514.6 359,518.5Z" fill="#555555" stroke="#333" stroke-width="0.7"/>
<path d="M356,510 L359,504 h4" stroke="#ddd" stroke-width="1.8" fill="none"/>
<path d="M364.5,502 l2.8,4.6 h-5.6z" fill="#e8c21a" stroke="#8a6d00" stroke-width="0.5"/>
<path d="M371,519.5 C368.4,515.6 363.4,512.2 363.4,508 A7.6,7.6 0 1 1 378.6,508 C378.6,512.2 373.6,515.6 371,519.5Z" fill="#fb1522" stroke="#d80f1c" stroke-width="0.7"/>
<path d="M368,511 L371,505 h4" stroke="#fff" stroke-width="1.8" fill="none"/>
<path d="M376.5,503 l2.8,4.6 h-5.6z" fill="#e8c21a" stroke="#8a6d00" stroke-width="0.5"/>
<path d="M366,524.5 C363.4,520.6 358.4,517.2 358.4,513 A7.6,7.6 0 1 1 373.6,513 C373.6,517.2 368.6,520.6 366,524.5Z" fill="#ffffff" stroke="#bbb" stroke-width="0.7"/>
<text x="366" y="516.6" font-size="10.5" font-weight="bold" fill="#222" text-anchor="middle">s</text>
<path d="M371.5,508 l2.8,4.6 h-5.6z" fill="#e8c21a" stroke="#8a6d00" stroke-width="0.5"/>
<path d="M352,531.5 C349.4,527.6 344.4,524.2 344.4,520 A7.6,7.6 0 1 1 359.6,520 C359.6,524.2 354.6,527.6 352,531.5Z" fill="#1b62b8" stroke="#0c4a90" stroke-width="0.7"/>
<path d="M349,523 L352,517 h4" stroke="#9cf" stroke-width="1.8" fill="none"/>
<path d="M357.5,515 l2.8,4.6 h-5.6z" fill="#e8c21a" stroke="#8a6d00" stroke-width="0.5"/>
<path d="M363,534.5 C360.4,530.6 355.4,527.2 355.4,523 A7.6,7.6 0 1 1 370.6,523 C370.6,527.2 365.6,530.6 363,534.5Z" fill="#fb1522" stroke="#d80f1c" stroke-width="0.7"/>
<path d="M360,526 L363,520 h4" stroke="#fff" stroke-width="1.8" fill="none"/>
<path d="M368.5,518 l2.8,4.6 h-5.6z" fill="#e8c21a" stroke="#8a6d00" stroke-width="0.5"/>
<path d="M382,534.5 C379.4,530.6 374.4,527.2 374.4,523 A7.6,7.6 0 1 1 389.6,523 C389.6,527.2 384.6,530.6 382,534.5Z" fill="#ffffff" stroke="#bbb" stroke-width="0.7"/>
<text x="382" y="526.6" font-size="10.5" font-weight="bold" fill="#6a2a8a" text-anchor="middle">d</text>
<path d="M387.5,518 l2.8,4.6 h-5.6z" fill="#e8c21a" stroke="#8a6d00" stroke-width="0.5"/>
<path d="M406,519.5 C403.4,515.6 398.4,512.2 398.4,508 A7.6,7.6 0 1 1 413.6,508 C413.6,512.2 408.6,515.6 406,519.5Z" fill="#ffffff" stroke="#bbb" stroke-width="0.7"/>
<text x="406" y="511.6" font-size="10.5" font-weight="bold" fill="#222" text-anchor="middle">s</text>
<path d="M411.5,503 l2.8,4.6 h-5.6z" fill="#e8c21a" stroke="#8a6d00" stroke-width="0.5"/>
<path d="M424,507.5 C421.4,503.6 416.4,500.2 416.4,496 A7.6,7.6 0 1 1 431.6,496 C431.6,500.2 426.6,503.6 424,507.5Z" fill="#ffffff" stroke="#bbb" stroke-width="0.7"/>
<text x="424" y="499.6" font-size="10.5" font-weight="bold" fill="#555" text-anchor="middle">S</text>
<path d="M429.5,491 l2.8,4.6 h-5.6z" fill="#e8c21a" stroke="#8a6d00" stroke-width="0.5"/>
<path d="M451,506.5 C448.4,502.6 443.4,499.2 443.4,495 A7.6,7.6 0 1 1 458.6,495 C458.6,499.2 453.6,502.6 451,506.5Z" fill="#1b62b8" stroke="#0c4a90" stroke-width="0.7"/>
<path d="M448,498 L451,492 h4" stroke="#9cf" stroke-width="1.8" fill="none"/>
<path d="M456.5,490 l2.8,4.6 h-5.6z" fill="#e8c21a" stroke="#8a6d00" stroke-width="0.5"/>
<path d="M485,492.5 C482.4,488.6 477.4,485.2 477.4,481 A7.6,7.6 0 1 1 492.6,481 C492.6,485.2 487.6,488.6 485,492.5Z" fill="#ffffff" stroke="#bbb" stroke-width="0.7"/>
<text x="485" y="484.6" font-size="10.5" font-weight="bold" fill="#6a2a8a" text-anchor="middle">d</text>
<path d="M490.5,476 l2.8,4.6 h-5.6z" fill="#e8c21a" stroke="#8a6d00" stroke-width="0.5"/>
<path d="M463,549.5 C460.4,545.6 455.4,542.2 455.4,538 A7.6,7.6 0 1 1 470.6,538 C470.6,542.2 465.6,545.6 463,549.5Z" fill="#555555" stroke="#333" stroke-width="0.7"/>
<path d="M460,541 L463,535 h4" stroke="#ddd" stroke-width="1.8" fill="none"/>
<path d="M468.5,533 l2.8,4.6 h-5.6z" fill="#e8c21a" stroke="#8a6d00" stroke-width="0.5"/>
<path d="M486,541.5 C483.4,537.6 478.4,534.2 478.4,530 A7.6,7.6 0 1 1 493.6,530 C493.6,534.2 488.6,537.6 486,541.5Z" fill="#555555" stroke="#333" stroke-width="0.7"/>
<path d="M483,533 L486,527 h4" stroke="#ddd" stroke-width="1.8" fill="none"/>
<path d="M491.5,525 l2.8,4.6 h-5.6z" fill="#e8c21a" stroke="#8a6d00" stroke-width="0.5"/>
<path d="M417,572.5 C414.4,568.6 409.4,565.2 409.4,561 A7.6,7.6 0 1 1 424.6,561 C424.6,565.2 419.6,568.6 417,572.5Z" fill="#ffffff" stroke="#bbb" stroke-width="0.7"/>
<text x="417" y="564.6" font-size="10.5" font-weight="bold" fill="#e8202a" text-anchor="middle">S</text>
<path d="M422.5,556 l2.8,4.6 h-5.6z" fill="#e8c21a" stroke="#8a6d00" stroke-width="0.5"/>
<path d="M471.5,580.5 C468.9,576.6 463.9,573.2 463.9,569 A7.6,7.6 0 1 1 479.1,569 C479.1,573.2 474.1,576.6 471.5,580.5Z" fill="#fb1522" stroke="#d80f1c" stroke-width="0.7"/>
<path d="M468.5,572 L471.5,566 h4" stroke="#fff" stroke-width="1.8" fill="none"/>
<path d="M477.0,564 l2.8,4.6 h-5.6z" fill="#e8c21a" stroke="#8a6d00" stroke-width="0.5"/>
<path d="M481,581.5 C478.4,577.6 473.4,574.2 473.4,570 A7.6,7.6 0 1 1 488.6,570 C488.6,574.2 483.6,577.6 481,581.5Z" fill="#555555" stroke="#333" stroke-width="0.7"/>
<path d="M478,573 L481,567 h4" stroke="#ddd" stroke-width="1.8" fill="none"/>
<path d="M486.5,565 l2.8,4.6 h-5.6z" fill="#e8c21a" stroke="#8a6d00" stroke-width="0.5"/>
<path d="M497,575.5 C494.4,571.6 489.4,568.2 489.4,564 A7.6,7.6 0 1 1 504.6,564 C504.6,568.2 499.6,571.6 497,575.5Z" fill="#ffffff" stroke="#bbb" stroke-width="0.7"/>
<text x="497" y="567.6" font-size="10.5" font-weight="bold" fill="#555" text-anchor="middle">S</text>
<path d="M502.5,559 l2.8,4.6 h-5.6z" fill="#e8c21a" stroke="#8a6d00" stroke-width="0.5"/>
<path d="M153,599.5 C150.4,595.6 145.4,592.2 145.4,588 A7.6,7.6 0 1 1 160.6,588 C160.6,592.2 155.6,595.6 153,599.5Z" fill="#fb1522" stroke="#d80f1c" stroke-width="0.7"/>
<path d="M150,591 L153,585 h4" stroke="#fff" stroke-width="1.8" fill="none"/>
<path d="M158.5,583 l2.8,4.6 h-5.6z" fill="#e8c21a" stroke="#8a6d00" stroke-width="0.5"/>
<path d="M261.6,629.5 C259.0,625.6 254.00000000000003,622.2 254.00000000000003,618 A7.6,7.6 0 1 1 269.20000000000005,618 C269.20000000000005,622.2 264.20000000000005,625.6 261.6,629.5Z" fill="#fb1522" stroke="#d80f1c" stroke-width="0.7"/>
<path d="M258.6,621 L261.6,615 h4" stroke="#fff" stroke-width="1.8" fill="none"/>
<path d="M267.1,613 l2.8,4.6 h-5.6z" fill="#e8c21a" stroke="#8a6d00" stroke-width="0.5"/>
<path d="M341.5,644.5 C338.9,640.6 333.9,637.2 333.9,633 A7.6,7.6 0 1 1 349.1,633 C349.1,637.2 344.1,640.6 341.5,644.5Z" fill="#fb1522" stroke="#d80f1c" stroke-width="0.7"/>
<path d="M338.5,636 L341.5,630 h4" stroke="#fff" stroke-width="1.8" fill="none"/>
<path d="M347.0,628 l2.8,4.6 h-5.6z" fill="#e8c21a" stroke="#8a6d00" stroke-width="0.5"/>
<path d="M355,640.5 C352.4,636.6 347.4,633.2 347.4,629 A7.6,7.6 0 1 1 362.6,629 C362.6,633.2 357.6,636.6 355,640.5Z" fill="#ffffff" stroke="#bbb" stroke-width="0.7"/>
<text x="355" y="632.6" font-size="10.5" font-weight="bold" fill="#555" text-anchor="middle">S</text>
<path d="M360.5,624 l2.8,4.6 h-5.6z" fill="#e8c21a" stroke="#8a6d00" stroke-width="0.5"/>
<path d="M260,665.5 C257.4,661.6 252.4,658.2 252.4,654 A7.6,7.6 0 1 1 267.6,654 C267.6,658.2 262.6,661.6 260,665.5Z" fill="#ffffff" stroke="#bbb" stroke-width="0.7"/>
<text x="260" y="657.6" font-size="10.5" font-weight="bold" fill="#e8202a" text-anchor="middle">S</text>
<path d="M265.5,649 l2.8,4.6 h-5.6z" fill="#e8c21a" stroke="#8a6d00" stroke-width="0.5"/>
<path d="M280.5,674.0 C277.9,670.1 272.9,666.7 272.9,662.5 A7.6,7.6 0 1 1 288.1,662.5 C288.1,666.7 283.1,670.1 280.5,674.0Z" fill="#555555" stroke="#333" stroke-width="0.7"/>
<path d="M277.5,665.5 L280.5,659.5 h4" stroke="#ddd" stroke-width="1.8" fill="none"/>
<path d="M286.0,657.5 l2.8,4.6 h-5.6z" fill="#e8c21a" stroke="#8a6d00" stroke-width="0.5"/>
<path d="M233,680.5 C230.4,676.6 225.4,673.2 225.4,669 A7.6,7.6 0 1 1 240.6,669 C240.6,673.2 235.6,676.6 233,680.5Z" fill="#ffffff" stroke="#bbb" stroke-width="0.7"/>
<text x="233" y="672.6" font-size="10.5" font-weight="bold" fill="#222" text-anchor="middle">s</text>
<path d="M238.5,664 l2.8,4.6 h-5.6z" fill="#e8c21a" stroke="#8a6d00" stroke-width="0.5"/>
<path d="M229,688.5 C226.4,684.6 221.4,681.2 221.4,677 A7.6,7.6 0 1 1 236.6,677 C236.6,681.2 231.6,684.6 229,688.5Z" fill="#fb1522" stroke="#d80f1c" stroke-width="0.7"/>
<path d="M226,680 L229,674 h4" stroke="#fff" stroke-width="1.8" fill="none"/>
<path d="M234.5,672 l2.8,4.6 h-5.6z" fill="#e8c21a" stroke="#8a6d00" stroke-width="0.5"/>
<path d="M237,691.5 C234.4,687.6 229.4,684.2 229.4,680 A7.6,7.6 0 1 1 244.6,680 C244.6,684.2 239.6,687.6 237,691.5Z" fill="#ffffff" stroke="#bbb" stroke-width="0.7"/>
<text x="237" y="683.6" font-size="10.5" font-weight="bold" fill="#e8202a" text-anchor="middle">S</text>
<path d="M242.5,675 l2.8,4.6 h-5.6z" fill="#e8c21a" stroke="#8a6d00" stroke-width="0.5"/>
<path d="M245,691.5 C242.4,687.6 237.4,684.2 237.4,680 A7.6,7.6 0 1 1 252.6,680 C252.6,684.2 247.6,687.6 245,691.5Z" fill="#555555" stroke="#333" stroke-width="0.7"/>
<path d="M242,683 L245,677 h4" stroke="#ddd" stroke-width="1.8" fill="none"/>
<path d="M250.5,675 l2.8,4.6 h-5.6z" fill="#e8c21a" stroke="#8a6d00" stroke-width="0.5"/>
<path d="M278,691.5 C275.4,687.6 270.4,684.2 270.4,680 A7.6,7.6 0 1 1 285.6,680 C285.6,684.2 280.6,687.6 278,691.5Z" fill="#1b62b8" stroke="#0c4a90" stroke-width="0.7"/>
<path d="M275,683 L278,677 h4" stroke="#9cf" stroke-width="1.8" fill="none"/>
<path d="M283.5,675 l2.8,4.6 h-5.6z" fill="#e8c21a" stroke="#8a6d00" stroke-width="0.5"/>
<path d="M284.6,691.5 C282.0,687.6 277.0,684.2 277.0,680 A7.6,7.6 0 1 1 292.20000000000005,680 C292.20000000000005,684.2 287.20000000000005,687.6 284.6,691.5Z" fill="#ffffff" stroke="#bbb" stroke-width="0.7"/>
<text x="284.6" y="683.6" font-size="10.5" font-weight="bold" fill="#555" text-anchor="middle">S</text>
<path d="M290.1,675 l2.8,4.6 h-5.6z" fill="#e8c21a" stroke="#8a6d00" stroke-width="0.5"/>
<path d="M288.7,702.5 C286.09999999999997,698.6 281.09999999999997,695.2 281.09999999999997,691 A7.6,7.6 0 1 1 296.3,691 C296.3,695.2 291.3,698.6 288.7,702.5Z" fill="#fb1522" stroke="#d80f1c" stroke-width="0.7"/>
<path d="M285.7,694 L288.7,688 h4" stroke="#fff" stroke-width="1.8" fill="none"/>
<path d="M294.2,686 l2.8,4.6 h-5.6z" fill="#e8c21a" stroke="#8a6d00" stroke-width="0.5"/>
<path d="M269.7,703.5 C267.09999999999997,699.6 262.09999999999997,696.2 262.09999999999997,692 A7.6,7.6 0 1 1 277.3,692 C277.3,696.2 272.3,699.6 269.7,703.5Z" fill="#ffffff" stroke="#bbb" stroke-width="0.7"/>
<text x="269.7" y="695.6" font-size="10.5" font-weight="bold" fill="#6a2a8a" text-anchor="middle">d</text>
<path d="M275.2,687 l2.8,4.6 h-5.6z" fill="#e8c21a" stroke="#8a6d00" stroke-width="0.5"/>
<path d="M311.7,680.5 C309.09999999999997,676.6 304.09999999999997,673.2 304.09999999999997,669 A7.6,7.6 0 1 1 319.3,669 C319.3,673.2 314.3,676.6 311.7,680.5Z" fill="#ffffff" stroke="#bbb" stroke-width="0.7"/>
<text x="311.7" y="672.6" font-size="10.5" font-weight="bold" fill="#222" text-anchor="middle">s</text>
<path d="M317.2,664 l2.8,4.6 h-5.6z" fill="#e8c21a" stroke="#8a6d00" stroke-width="0.5"/>
<path d="M324,686.5 C321.4,682.6 316.4,679.2 316.4,675 A7.6,7.6 0 1 1 331.6,675 C331.6,679.2 326.6,682.6 324,686.5Z" fill="#555555" stroke="#333" stroke-width="0.7"/>
<path d="M321,678 L324,672 h4" stroke="#ddd" stroke-width="1.8" fill="none"/>
<path d="M329.5,670 l2.8,4.6 h-5.6z" fill="#e8c21a" stroke="#8a6d00" stroke-width="0.5"/>
<path d="M309,695.5 C306.4,691.6 301.4,688.2 301.4,684 A7.6,7.6 0 1 1 316.6,684 C316.6,688.2 311.6,691.6 309,695.5Z" fill="#ffffff" stroke="#bbb" stroke-width="0.7"/>
<text x="309" y="687.6" font-size="10.5" font-weight="bold" fill="#e8202a" text-anchor="middle">S</text>
<path d="M314.5,679 l2.8,4.6 h-5.6z" fill="#e8c21a" stroke="#8a6d00" stroke-width="0.5"/>
<path d="M336,691.5 C333.4,687.6 328.4,684.2 328.4,680 A7.6,7.6 0 1 1 343.6,680 C343.6,684.2 338.6,687.6 336,691.5Z" fill="#1b62b8" stroke="#0c4a90" stroke-width="0.7"/>
<path d="M333,683 L336,677 h4" stroke="#9cf" stroke-width="1.8" fill="none"/>
<path d="M341.5,675 l2.8,4.6 h-5.6z" fill="#e8c21a" stroke="#8a6d00" stroke-width="0.5"/>
<path d="M269.7,717.5 C267.09999999999997,713.6 262.09999999999997,710.2 262.09999999999997,706 A7.6,7.6 0 1 1 277.3,706 C277.3,710.2 272.3,713.6 269.7,717.5Z" fill="#ffffff" stroke="#bbb" stroke-width="0.7"/>
<text x="269.7" y="709.6" font-size="10.5" font-weight="bold" fill="#222" text-anchor="middle">s</text>
<path d="M275.2,701 l2.8,4.6 h-5.6z" fill="#e8c21a" stroke="#8a6d00" stroke-width="0.5"/>
<path d="M282,720.0 C279.4,716.1 274.4,712.7 274.4,708.5 A7.6,7.6 0 1 1 289.6,708.5 C289.6,712.7 284.6,716.1 282,720.0Z" fill="#555555" stroke="#333" stroke-width="0.7"/>
<path d="M279,711.5 L282,705.5 h4" stroke="#ddd" stroke-width="1.8" fill="none"/>
<path d="M287.5,703.5 l2.8,4.6 h-5.6z" fill="#e8c21a" stroke="#8a6d00" stroke-width="0.5"/>
<path d="M294,726.5 C291.4,722.6 286.4,719.2 286.4,715 A7.6,7.6 0 1 1 301.6,715 C301.6,719.2 296.6,722.6 294,726.5Z" fill="#ffffff" stroke="#bbb" stroke-width="0.7"/>
<text x="294" y="718.6" font-size="10.5" font-weight="bold" fill="#e8202a" text-anchor="middle">S</text>
<path d="M299.5,710 l2.8,4.6 h-5.6z" fill="#e8c21a" stroke="#8a6d00" stroke-width="0.5"/>
<path d="M306,717.5 C303.4,713.6 298.4,710.2 298.4,706 A7.6,7.6 0 1 1 313.6,706 C313.6,710.2 308.6,713.6 306,717.5Z" fill="#ffffff" stroke="#bbb" stroke-width="0.7"/>
<text x="306" y="709.6" font-size="10.5" font-weight="bold" fill="#6a2a8a" text-anchor="middle">d</text>
<path d="M311.5,701 l2.8,4.6 h-5.6z" fill="#e8c21a" stroke="#8a6d00" stroke-width="0.5"/>
<path d="M215,725.5 C212.4,721.6 207.4,718.2 207.4,714 A7.6,7.6 0 1 1 222.6,714 C222.6,718.2 217.6,721.6 215,725.5Z" fill="#ffffff" stroke="#bbb" stroke-width="0.7"/>
<text x="215" y="717.6" font-size="10.5" font-weight="bold" fill="#222" text-anchor="middle">s</text>
<path d="M220.5,709 l2.8,4.6 h-5.6z" fill="#e8c21a" stroke="#8a6d00" stroke-width="0.5"/>
<path d="M232.6,726.5 C230.0,722.6 225.0,719.2 225.0,715 A7.6,7.6 0 1 1 240.2,715 C240.2,719.2 235.2,722.6 232.6,726.5Z" fill="#1b62b8" stroke="#0c4a90" stroke-width="0.7"/>
<path d="M229.6,718 L232.6,712 h4" stroke="#9cf" stroke-width="1.8" fill="none"/>
<path d="M238.1,710 l2.8,4.6 h-5.6z" fill="#e8c21a" stroke="#8a6d00" stroke-width="0.5"/>
<path d="M268,743.5 C265.4,739.6 260.4,736.2 260.4,732 A7.6,7.6 0 1 1 275.6,732 C275.6,736.2 270.6,739.6 268,743.5Z" fill="#fb1522" stroke="#d80f1c" stroke-width="0.7"/>
<path d="M265,735 L268,729 h4" stroke="#fff" stroke-width="1.8" fill="none"/>
<path d="M273.5,727 l2.8,4.6 h-5.6z" fill="#e8c21a" stroke="#8a6d00" stroke-width="0.5"/>
<path d="M188.5,759.5 C185.9,755.6 180.9,752.2 180.9,748 A7.6,7.6 0 1 1 196.1,748 C196.1,752.2 191.1,755.6 188.5,759.5Z" fill="#ffffff" stroke="#bbb" stroke-width="0.7"/>
<text x="188.5" y="751.6" font-size="10.5" font-weight="bold" fill="#6a2a8a" text-anchor="middle">d</text>
<path d="M194.0,743 l2.8,4.6 h-5.6z" fill="#e8c21a" stroke="#8a6d00" stroke-width="0.5"/>
<path d="M217,757.5 C214.4,753.6 209.4,750.2 209.4,746 A7.6,7.6 0 1 1 224.6,746 C224.6,750.2 219.6,753.6 217,757.5Z" fill="#ffffff" stroke="#bbb" stroke-width="0.7"/>
<text x="217" y="749.6" font-size="10.5" font-weight="bold" fill="#222" text-anchor="middle">s</text>
<path d="M222.5,741 l2.8,4.6 h-5.6z" fill="#e8c21a" stroke="#8a6d00" stroke-width="0.5"/>
<path d="M190,769.5 C187.4,765.6 182.4,762.2 182.4,758 A7.6,7.6 0 1 1 197.6,758 C197.6,762.2 192.6,765.6 190,769.5Z" fill="#ffffff" stroke="#bbb" stroke-width="0.7"/>
<text x="190" y="761.6" font-size="10.5" font-weight="bold" fill="#555" text-anchor="middle">S</text>
<path d="M195.5,753 l2.8,4.6 h-5.6z" fill="#e8c21a" stroke="#8a6d00" stroke-width="0.5"/>
<path d="M209,765.5 C206.4,761.6 201.4,758.2 201.4,754 A7.6,7.6 0 1 1 216.6,754 C216.6,758.2 211.6,761.6 209,765.5Z" fill="#ffffff" stroke="#bbb" stroke-width="0.7"/>
<text x="209" y="757.6" font-size="10.5" font-weight="bold" fill="#e8202a" text-anchor="middle">S</text>
<path d="M214.5,749 l2.8,4.6 h-5.6z" fill="#e8c21a" stroke="#8a6d00" stroke-width="0.5"/>
<path d="M145,771.5 C142.4,767.6 137.4,764.2 137.4,760 A7.6,7.6 0 1 1 152.6,760 C152.6,764.2 147.6,767.6 145,771.5Z" fill="#ffffff" stroke="#bbb" stroke-width="0.7"/>
<text x="145" y="763.6" font-size="10.5" font-weight="bold" fill="#6a2a8a" text-anchor="middle">d</text>
<path d="M150.5,755 l2.8,4.6 h-5.6z" fill="#e8c21a" stroke="#8a6d00" stroke-width="0.5"/>
<path d="M156,769.5 C153.4,765.6 148.4,762.2 148.4,758 A7.6,7.6 0 1 1 163.6,758 C163.6,762.2 158.6,765.6 156,769.5Z" fill="#ffffff" stroke="#bbb" stroke-width="0.7"/>
<text x="156" y="761.6" font-size="10.5" font-weight="bold" fill="#222" text-anchor="middle">s</text>
<path d="M161.5,753 l2.8,4.6 h-5.6z" fill="#e8c21a" stroke="#8a6d00" stroke-width="0.5"/>
<path d="M114,773.5 C111.4,769.6 106.4,766.2 106.4,762 A7.6,7.6 0 1 1 121.6,762 C121.6,766.2 116.6,769.6 114,773.5Z" fill="#ffffff" stroke="#bbb" stroke-width="0.7"/>
<text x="114" y="765.6" font-size="10.5" font-weight="bold" fill="#555" text-anchor="middle">S</text>
<path d="M119.5,757 l2.8,4.6 h-5.6z" fill="#e8c21a" stroke="#8a6d00" stroke-width="0.5"/>
<path d="M103,777.5 C100.4,773.6 95.4,770.2 95.4,766 A7.6,7.6 0 1 1 110.6,766 C110.6,770.2 105.6,773.6 103,777.5Z" fill="#ffffff" stroke="#bbb" stroke-width="0.7"/>
<text x="103" y="769.6" font-size="10.5" font-weight="bold" fill="#e8202a" text-anchor="middle">S</text>
<path d="M108.5,761 l2.8,4.6 h-5.6z" fill="#e8c21a" stroke="#8a6d00" stroke-width="0.5"/>
<path d="M110,794.5 C107.4,790.6 102.4,787.2 102.4,783 A7.6,7.6 0 1 1 117.6,783 C117.6,787.2 112.6,790.6 110,794.5Z" fill="#fb1522" stroke="#d80f1c" stroke-width="0.7"/>
<path d="M107,786 L110,780 h4" stroke="#fff" stroke-width="1.8" fill="none"/>
<path d="M115.5,778 l2.8,4.6 h-5.6z" fill="#e8c21a" stroke="#8a6d00" stroke-width="0.5"/>
<path d="M122,790.5 C119.4,786.6 114.4,783.2 114.4,779 A7.6,7.6 0 1 1 129.6,779 C129.6,783.2 124.6,786.6 122,790.5Z" fill="#fb1522" stroke="#d80f1c" stroke-width="0.7"/>
<path d="M119,782 L122,776 h4" stroke="#fff" stroke-width="1.8" fill="none"/>
<path d="M127.5,774 l2.8,4.6 h-5.6z" fill="#e8c21a" stroke="#8a6d00" stroke-width="0.5"/>
<path d="M130,783.5 C127.4,779.6 122.4,776.2 122.4,772 A7.6,7.6 0 1 1 137.6,772 C137.6,776.2 132.6,779.6 130,783.5Z" fill="#1b62b8" stroke="#0c4a90" stroke-width="0.7"/>
<path d="M127,775 L130,769 h4" stroke="#9cf" stroke-width="1.8" fill="none"/>
<path d="M135.5,767 l2.8,4.6 h-5.6z" fill="#e8c21a" stroke="#8a6d00" stroke-width="0.5"/>
<path d="M84,810.5 C81.4,806.6 76.4,803.2 76.4,799 A7.6,7.6 0 1 1 91.6,799 C91.6,803.2 86.6,806.6 84,810.5Z" fill="#555555" stroke="#333" stroke-width="0.7"/>
<path d="M81,802 L84,796 h4" stroke="#ddd" stroke-width="1.8" fill="none"/>
<path d="M89.5,794 l2.8,4.6 h-5.6z" fill="#e8c21a" stroke="#8a6d00" stroke-width="0.5"/>
<path d="M68,830.5 C65.4,826.6 60.4,823.2 60.4,819 A7.6,7.6 0 1 1 75.6,819 C75.6,823.2 70.6,826.6 68,830.5Z" fill="#ffffff" stroke="#bbb" stroke-width="0.7"/>
<text x="68" y="822.6" font-size="10.5" font-weight="bold" fill="#6a2a8a" text-anchor="middle">d</text>
<path d="M73.5,814 l2.8,4.6 h-5.6z" fill="#e8c21a" stroke="#8a6d00" stroke-width="0.5"/>
<path d="M42,857.5 C39.4,853.6 34.4,850.2 34.4,846 A7.6,7.6 0 1 1 49.6,846 C49.6,850.2 44.6,853.6 42,857.5Z" fill="#ffffff" stroke="#bbb" stroke-width="0.7"/>
<text x="42" y="849.6" font-size="10.5" font-weight="bold" fill="#222" text-anchor="middle">s</text>
<path d="M47.5,841 l2.8,4.6 h-5.6z" fill="#e8c21a" stroke="#8a6d00" stroke-width="0.5"/>
<rect x="48" y="284.5" width="172.5" height="39.5" fill="#fff" rx="2"/>
<rect x="126" y="284.5" width="1" height="39.5" fill="#e6e6e6"/>
<text x="65.5" y="310" font-size="18" fill="#111" font-weight="bold" textLength="44" lengthAdjust="spacingAndGlyphs">Mapa</text>
<text x="144.7" y="310" font-size="18" fill="#666" textLength="59.4" lengthAdjust="spacingAndGlyphs">Satélite</text>
<rect x="242.5" y="285.5" width="110" height="34" fill="#fff" stroke="#000" stroke-width="2" rx="2"/>
<text x="255" y="307" font-size="14" fill="#111" textLength="84" lengthAdjust="spacingAndGlyphs">Centrar mapa</text>
<rect x="488" y="284.5" width="40" height="39.5" fill="#fff" rx="2"/>
<path d="M499,300 v-5 h5 M512,295 h5 v5 M517,309 v5 h-5 M504,314 h-5 v-5" stroke="#555" stroke-width="2" fill="none"/>
<circle cx="507.5" cy="895.5" r="20" fill="#fff" style="filter:drop-shadow(0 1px 2px rgba(0,0,0,.3))"/>
<path d="M504.3,888.5 L507.8,885.3 L511.3,888.5 M504.3,902.7 L507.8,905.9 L511.3,902.7 M498.7,892.3 L495.7,895.6 L498.7,898.9 M516.9,892.3 L519.9,895.6 L516.9,898.9" stroke="#666" stroke-width="2" fill="none"/>
<rect x="488" y="948" width="40" height="40" fill="#fff" rx="2"/>
<path d="M502.6,962.5 Q507.5,960.5 512.4,962.5 L515.3,972 Q515.6,973.6 514.2,973.6 L512.6,967 L512.4,975 L511.6,982.6 H508.3 L507.8,975.5 L507.2,982.6 H503.9 L503.1,975 L502.9,967 L501.3,973.6 Q499.9,973.6 500.2,972Z" fill="#fbbc04" stroke="#b07d00" stroke-width="0.6"/><circle cx="507.6" cy="957.6" r="5" fill="#fbbc04" stroke="#b07d00" stroke-width="0.6"/><path d="M504.5,962 L507.6,966.8 L510.7,962Z" fill="#f28b00"/>
<text x="46" y="1005" font-size="17" font-weight="bold" style="paint-order:stroke;stroke:#fff;stroke-width:2px"><tspan fill="#4285f4">G</tspan><tspan fill="#ea4335">o</tspan><tspan fill="#fbbc05">o</tspan><tspan fill="#4285f4">g</tspan><tspan fill="#34a853">l</tspan><tspan fill="#ea4335">e</tspan></text>
<rect x="130" y="998" width="408" height="13" fill="#f5f5f5" fill-opacity="0.75"/>
<text x="135.6" y="1008" font-size="10" fill="#333" textLength="111" lengthAdjust="spacingAndGlyphs">Combinaciones de teclas</text>
<text x="259.7" y="1008" font-size="10" fill="#333" textLength="68.8" lengthAdjust="spacingAndGlyphs">Datos del mapa</text>
<text x="340.9" y="1008" font-size="10" fill="#333" textLength="41.7" lengthAdjust="spacingAndGlyphs">Términos</text>
<text x="395" y="1008" font-size="10" fill="#333" textLength="136.6" lengthAdjust="spacingAndGlyphs">Notificar un problema de Maps</text>
<rect x="253.5" y="999" width="1" height="12" fill="#d0d0d0"/>
<rect x="335.2" y="999" width="1" height="12" fill="#d0d0d0"/>
<rect x="388.9" y="999" width="1" height="12" fill="#d0d0d0"/>
</g></svg>
<div class="card" style="left:1013px;top:206px;width:881px;height:818px"></div>
<div class="a" style="left:1025.5px;top:229px;font-size:15.8px;font-weight:bold;line-height:18px;color:#111">Plantes</div>
<div class="btn" style="left:1698px;top:218px;width:61px;height:38px;line-height:37px;font-size:14.5px">Copia</div>
<div class="btn" style="left:1767px;top:218px;width:57px;height:38px;line-height:37px;font-size:14.5px">Excel</div>
<div class="btn" style="left:1832px;top:218px;width:50px;height:38px;line-height:37px;font-size:14.5px">PDF</div>
<div class="a" style="left:1025px;top:266px;width:858px;height:746px;overflow:hidden">
<div class="a" style="left:63px;top:8px;font-size:12.5px;font-weight:bold;line-height:15px;color:#212529">Nom de la planta</div>
<div class="a" style="left:255px;top:8px;font-size:12.5px;font-weight:bold;line-height:15px;color:#212529">Estat</div>
<div class="a" style="left:453px;top:8px;font-size:12.5px;font-weight:bold;line-height:15px;color:#212529">Ubicació</div>
<div class="a" style="left:675px;top:8px;font-size:12.5px;font-weight:bold;line-height:15px;color:#212529">Marca</div>
<div class="a" style="left:765px;top:8px;font-size:12.5px;font-weight:bold;line-height:15px;color:#212529">Acció</div>
<div class="a" style="left:223px;top:6.5px;width:0;height:0;border-left:4.5px solid transparent;border-right:4.5px solid transparent;border-bottom:7px solid #777"></div><div class="a" style="left:223px;top:15.5px;width:0;height:0;border-left:4.5px solid transparent;border-right:4.5px solid transparent;border-top:7px solid #e3e3e3"></div>
<div class="a" style="left:292px;top:6.5px;width:0;height:0;border-left:4.5px solid transparent;border-right:4.5px solid transparent;border-bottom:7px solid #d9d9d9"></div><div class="a" style="left:292px;top:15.5px;width:0;height:0;border-left:4.5px solid transparent;border-right:4.5px solid transparent;border-top:7px solid #e3e3e3"></div>
<div class="a" style="left:642px;top:6.5px;width:0;height:0;border-left:4.5px solid transparent;border-right:4.5px solid transparent;border-bottom:7px solid #d9d9d9"></div><div class="a" style="left:642px;top:15.5px;width:0;height:0;border-left:4.5px solid transparent;border-right:4.5px solid transparent;border-top:7px solid #e3e3e3"></div>
<div class="a" style="left:721px;top:6.5px;width:0;height:0;border-left:4.5px solid transparent;border-right:4.5px solid transparent;border-bottom:7px solid #d9d9d9"></div><div class="a" style="left:721px;top:15.5px;width:0;height:0;border-left:4.5px solid transparent;border-right:4.5px solid transparent;border-top:7px solid #e3e3e3"></div>
<div class="a" style="left:819px;top:6.5px;width:0;height:0;border-left:4.5px solid transparent;border-right:4.5px solid transparent;border-bottom:7px solid #d9d9d9"></div><div class="a" style="left:819px;top:15.5px;width:0;height:0;border-left:4.5px solid transparent;border-right:4.5px solid transparent;border-top:7px solid #e3e3e3"></div>
<div class="a" style="left:0;top:27.5px;width:842px;height:1.6px;background:#a3a3a3"></div>
<div class="a" style="left:0;top:29.00px;width:842px;height:28px;background:#f5f5f5"></div>
<div class="a" style="left:8px;top:38.00px;width:0;height:0;border-top:5px solid transparent;border-bottom:5px solid transparent;border-left:9.5px solid #777"></div>
<div class="a" style="left:25px;top:35.00px;font-size:13.5px;line-height:16px;color:#707070">Plant #1473 - 5a59d</div>
<div class="a" style="left:255px;top:35.00px;font-size:12.6px;line-height:16px;color:#767676">En línia</div>
<div class="a" style="left:324px;top:35.00px;font-size:12.7px;line-height:16px;color:#4e7595;transform:scaleX(1.002);transform-origin:0 0">Carrer Terol 2A - 43895 L'Ampolla - Catalunya - Espanya</div>
<div class="a" style="left:674px;top:35.00px;font-size:13.2px;line-height:16px;color:#7d7d7d">Datadis</div>
<svg class="a" style="left:756px;top:35.00px;overflow:visible" width="16" height="16" viewBox="0 0 16 16"><path d="M8 12.6C5.6 9.6 3 6.6 3 4.9a5 5 0 0 1 10 0c0 1.7-2.6 4.7-5 7.7z" stroke="#333" stroke-width="1" fill="none"/><circle cx="8" cy="4.7" r="1.7" stroke="#333" stroke-width="1.1" fill="none"/><path d="M5.4 10.9C2.4 11.3 0.3 12.2 0.3 13.25 0.3 14.6 3.7 15.6 8 15.6s7.7-1 7.7-2.35c0-1.05-2.1-1.95-5.1-2.35" stroke="#333" stroke-width="1" fill="none"/></svg>
<svg class="a" style="left:785px;top:35.00px;overflow:visible" width="16" height="16" viewBox="0 0 16 16"><circle cx="8" cy="8" r="7.6" stroke="#333" stroke-width="1" fill="none"/><path d="M8 5v6M5 8h6" stroke="#333" stroke-width="1.1"/></svg>
<svg class="a" style="left:814px;top:35.00px;overflow:visible" width="16" height="16" viewBox="0 0 16 16"><path d="M6.6 0.6H1.4v14.8h5.2" stroke="#333" stroke-width="1.1" fill="none"/><path d="M5 7.9h8.5" stroke="#444" stroke-width="1.2"/><path d="M11.8 5.2 14.6 7.9l-2.8 2.7" stroke="#333" stroke-width="1.2" fill="none"/></svg>
<div class="a" style="left:0;top:57.00px;width:842px;height:28px;background:#fff"></div>
<div class="a" style="left:8px;top:66.00px;width:0;height:0;border-top:5px solid transparent;border-bottom:5px solid transparent;border-left:9.5px solid #777"></div>
<div class="a" style="left:25px;top:63.00px;font-size:13.5px;line-height:16px;color:#707070">Plant #1474 - c639c</div>
<div class="a" style="left:255px;top:63.00px;font-size:12.6px;line-height:16px;color:#767676">En línia</div>
<div class="a" style="left:324px;top:63.00px;font-size:12.7px;line-height:16px;color:#4e7595;transform:scaleX(0.987);transform-origin:0 0">Carrer Portbou 13 - 17800 Olot - Catalunya - Espanya</div>
<div class="a" style="left:674px;top:63.00px;font-size:13.2px;line-height:16px;color:#7d7d7d">Salicru</div>
<svg class="a" style="left:756px;top:63.00px;overflow:visible" width="16" height="16" viewBox="0 0 16 16"><path d="M8 12.6C5.6 9.6 3 6.6 3 4.9a5 5 0 0 1 10 0c0 1.7-2.6 4.7-5 7.7z" stroke="#333" stroke-width="1" fill="none"/><circle cx="8" cy="4.7" r="1.7" stroke="#333" stroke-width="1.1" fill="none"/><path d="M5.4 10.9C2.4 11.3 0.3 12.2 0.3 13.25 0.3 14.6 3.7 15.6 8 15.6s7.7-1 7.7-2.35c0-1.05-2.1-1.95-5.1-2.35" stroke="#333" stroke-width="1" fill="none"/></svg>
<svg class="a" style="left:785px;top:63.00px;overflow:visible" width="16" height="16" viewBox="0 0 16 16"><circle cx="8" cy="8" r="7.6" stroke="#333" stroke-width="1" fill="none"/><path d="M8 5v6M5 8h6" stroke="#333" stroke-width="1.1"/></svg>
<svg class="a" style="left:814px;top:63.00px;overflow:visible" width="16" height="16" viewBox="0 0 16 16"><path d="M6.6 0.6H1.4v14.8h5.2" stroke="#333" stroke-width="1.1" fill="none"/><path d="M5 7.9h8.5" stroke="#444" stroke-width="1.2"/><path d="M11.8 5.2 14.6 7.9l-2.8 2.7" stroke="#333" stroke-width="1.2" fill="none"/></svg>
<div class="a" style="left:0;top:85.00px;width:842px;height:36px;background:#f5f5f5"></div>
<div class="a" style="left:8px;top:98.00px;width:0;height:0;border-top:5px solid transparent;border-bottom:5px solid transparent;border-left:9.5px solid #777"></div>
<div class="a" style="left:25px;top:95.00px;font-size:13.5px;line-height:16px;color:#707070">Plant #1475 - 45006</div>
<div class="a" style="left:255px;top:95.00px;font-size:12.6px;line-height:16px;color:#767676">En línia</div>
<div class="a" style="left:324px;top:89.00px;font-size:12.7px;line-height:14px;color:#4e7595;transform:scaleX(0.944);transform-origin:0 0">Carrer Francesc Rovira i Riba, 11111, 08191 Rubí, Barcelona,</div>
<div class="a" style="left:324px;top:103.00px;font-size:12.7px;line-height:14px;color:#4e7595;transform:scaleX(0.99);transform-origin:0 0">España</div>
<div class="a" style="left:674px;top:95.00px;font-size:13.2px;line-height:16px;color:#7d7d7d">Victron</div>
<svg class="a" style="left:756px;top:95.00px;overflow:visible" width="16" height="16" viewBox="0 0 16 16"><path d="M8 12.6C5.6 9.6 3 6.6 3 4.9a5 5 0 0 1 10 0c0 1.7-2.6 4.7-5 7.7z" stroke="#333" stroke-width="1" fill="none"/><circle cx="8" cy="4.7" r="1.7" stroke="#333" stroke-width="1.1" fill="none"/><path d="M5.4 10.9C2.4 11.3 0.3 12.2 0.3 13.25 0.3 14.6 3.7 15.6 8 15.6s7.7-1 7.7-2.35c0-1.05-2.1-1.95-5.1-2.35" stroke="#333" stroke-width="1" fill="none"/></svg>
<svg class="a" style="left:785px;top:95.00px;overflow:visible" width="16" height="16" viewBox="0 0 16 16"><circle cx="8" cy="8" r="7.6" stroke="#333" stroke-width="1" fill="none"/><path d="M8 5v6M5 8h6" stroke="#333" stroke-width="1.1"/></svg>
<svg class="a" style="left:814px;top:95.00px;overflow:visible" width="16" height="16" viewBox="0 0 16 16"><path d="M6.6 0.6H1.4v14.8h5.2" stroke="#333" stroke-width="1.1" fill="none"/><path d="M5 7.9h8.5" stroke="#444" stroke-width="1.2"/><path d="M11.8 5.2 14.6 7.9l-2.8 2.7" stroke="#333" stroke-width="1.2" fill="none"/></svg>
<div class="a" style="left:0;top:121.00px;width:842px;height:36px;background:#fff"></div>
<div class="a" style="left:8px;top:134.00px;width:0;height:0;border-top:5px solid transparent;border-bottom:5px solid transparent;border-left:9.5px solid #777"></div>
<div class="a" style="left:25px;top:131.00px;font-size:13.5px;line-height:16px;color:#707070">Plant #1476 - 4d614</div>
<div class="a" style="left:255px;top:131.00px;font-size:12.6px;line-height:16px;color:#767676">En línia</div>
<div class="a" style="left:324px;top:125.00px;font-size:12.7px;line-height:14px;color:#4e7595;transform:scaleX(0.99);transform-origin:0 0">Carrer del Rossinyol 1 - 08690 Santa Coloma de Cervelló -</div>
<div class="a" style="left:324px;top:139.00px;font-size:12.7px;line-height:14px;color:#4e7595;transform:scaleX(0.99);transform-origin:0 0">Catalunya - Espanya</div>
<div class="a" style="left:674px;top:131.00px;font-size:13.2px;line-height:16px;color:#7d7d7d">Huawei</div>
<svg class="a" style="left:756px;top:131.00px;overflow:visible" width="16" height="16" viewBox="0 0 16 16"><path d="M8 12.6C5.6 9.6 3 6.6 3 4.9a5 5 0 0 1 10 0c0 1.7-2.6 4.7-5 7.7z" stroke="#333" stroke-width="1" fill="none"/><circle cx="8" cy="4.7" r="1.7" stroke="#333" stroke-width="1.1" fill="none"/><path d="M5.4 10.9C2.4 11.3 0.3 12.2 0.3 13.25 0.3 14.6 3.7 15.6 8 15.6s7.7-1 7.7-2.35c0-1.05-2.1-1.95-5.1-2.35" stroke="#333" stroke-width="1" fill="none"/></svg>
<svg class="a" style="left:785px;top:131.00px;overflow:visible" width="16" height="16" viewBox="0 0 16 16"><circle cx="8" cy="8" r="7.6" stroke="#333" stroke-width="1" fill="none"/><path d="M8 5v6M5 8h6" stroke="#333" stroke-width="1.1"/></svg>
<svg class="a" style="left:814px;top:131.00px;overflow:visible" width="16" height="16" viewBox="0 0 16 16"><path d="M6.6 0.6H1.4v14.8h5.2" stroke="#333" stroke-width="1.1" fill="none"/><path d="M5 7.9h8.5" stroke="#444" stroke-width="1.2"/><path d="M11.8 5.2 14.6 7.9l-2.8 2.7" stroke="#333" stroke-width="1.2" fill="none"/></svg>
<div class="a" style="left:0;top:157.00px;width:842px;height:36px;background:#f5f5f5"></div>
<div class="a" style="left:8px;top:170.00px;width:0;height:0;border-top:5px solid transparent;border-bottom:5px solid transparent;border-left:9.5px solid #777"></div>
<div class="a" style="left:25px;top:167.00px;font-size:13.5px;line-height:16px;color:#707070">Plant #1477 - 61e86</div>
<div class="a" style="left:255px;top:167.00px;font-size:12.6px;line-height:16px;color:#767676">En línia</div>
<div class="a" style="left:324px;top:161.00px;font-size:12.7px;line-height:14px;color:#4e7595;transform:scaleX(1.008);transform-origin:0 0">Carrer de Colón 26 Planta - 46004 València - Comunidad</div>
<div class="a" style="left:324px;top:175.00px;font-size:12.7px;line-height:14px;color:#4e7595;transform:scaleX(0.99);transform-origin:0 0">Valenciana - Espanya</div>
<div class="a" style="left:674px;top:167.00px;font-size:13.2px;line-height:16px;color:#7d7d7d">Ingeteam</div>
<svg class="a" style="left:756px;top:167.00px;overflow:visible" width="16" height="16" viewBox="0 0 16 16"><path d="M8 12.6C5.6 9.6 3 6.6 3 4.9a5 5 0 0 1 10 0c0 1.7-2.6 4.7-5 7.7z" stroke="#333" stroke-width="1" fill="none"/><circle cx="8" cy="4.7" r="1.7" stroke="#333" stroke-width="1.1" fill="none"/><path d="M5.4 10.9C2.4 11.3 0.3 12.2 0.3 13.25 0.3 14.6 3.7 15.6 8 15.6s7.7-1 7.7-2.35c0-1.05-2.1-1.95-5.1-2.35" stroke="#333" stroke-width="1" fill="none"/></svg>
<svg class="a" style="left:785px;top:167.00px;overflow:visible" width="16" height="16" viewBox="0 0 16 16"><circle cx="8" cy="8" r="7.6" stroke="#333" stroke-width="1" fill="none"/><path d="M8 5v6M5 8h6" stroke="#333" stroke-width="1.1"/></svg>
<svg class="a" style="left:814px;top:167.00px;overflow:visible" width="16" height="16" viewBox="0 0 16 16"><path d="M6.6 0.6H1.4v14.8h5.2" stroke="#333" stroke-width="1.1" fill="none"/><path d="M5 7.9h8.5" stroke="#444" stroke-width="1.2"/><path d="M11.8 5.2 14.6 7.9l-2.8 2.7" stroke="#333" stroke-width="1.2" fill="none"/></svg>
<div class="a" style="left:0;top:193.00px;width:842px;height:39.3px;background:#fff"></div>
<div class="a" style="left:8px;top:207.65px;width:0;height:0;border-top:5px solid transparent;border-bottom:5px solid transparent;border-left:9.5px solid #777"></div>
<div class="a" style="left:25px;top:204.65px;font-size:13.5px;line-height:16px;color:#707070">Plant #1478 - ef12e</div>
<div class="a" style="left:255px;top:196.65px;font-size:12.6px;line-height:16px;color:#767676;white-space:normal;width:60px">Fora de<br>línia</div>
<div class="a" style="left:674px;top:204.65px;font-size:13.2px;line-height:16px;color:#7d7d7d">Ingeteam</div>
<svg class="a" style="left:771px;top:204.65px;overflow:visible" width="16" height="16" viewBox="0 0 16 16"><path d="M8 12.6C5.6 9.6 3 6.6 3 4.9a5 5 0 0 1 10 0c0 1.7-2.6 4.7-5 7.7z" stroke="#333" stroke-width="1" fill="none"/><circle cx="8" cy="4.7" r="1.7" stroke="#333" stroke-width="1.1" fill="none"/><path d="M5.4 10.9C2.4 11.3 0.3 12.2 0.3 13.25 0.3 14.6 3.7 15.6 8 15.6s7.7-1 7.7-2.35c0-1.05-2.1-1.95-5.1-2.35" stroke="#333" stroke-width="1" fill="none"/></svg>
<svg class="a" style="left:800px;top:204.65px;overflow:visible" width="16" height="16" viewBox="0 0 16 16"><path d="M6.6 0.6H1.4v14.8h5.2" stroke="#333" stroke-width="1.1" fill="none"/><path d="M5 7.9h8.5" stroke="#444" stroke-width="1.2"/><path d="M11.8 5.2 14.6 7.9l-2.8 2.7" stroke="#333" stroke-width="1.2" fill="none"/></svg>
<div class="a" style="left:0;top:232.30px;width:842px;height:28px;background:#f5f5f5"></div>
<div class="a" style="left:8px;top:241.30px;width:0;height:0;border-top:5px solid transparent;border-bottom:5px solid transparent;border-left:9.5px solid #777"></div>
<div class="a" style="left:25px;top:238.30px;font-size:13.5px;line-height:16px;color:#707070">Plant #1479 - 2f6a4</div>
<div class="a" style="left:255px;top:238.30px;font-size:12.6px;line-height:16px;color:#767676">En línia</div>
<div class="a" style="left:324px;top:238.30px;font-size:12.7px;line-height:16px;color:#4e7595;transform:scaleX(0.987);transform-origin:0 0">Carrer Portbou 13 - 17800 Olot - Catalunya - Espanya</div>
<div class="a" style="left:674px;top:238.30px;font-size:13.2px;line-height:16px;color:#7d7d7d">SolarEdge</div>
<svg class="a" style="left:756px;top:238.30px;overflow:visible" width="16" height="16" viewBox="0 0 16 16"><path d="M8 12.6C5.6 9.6 3 6.6 3 4.9a5 5 0 0 1 10 0c0 1.7-2.6 4.7-5 7.7z" stroke="#333" stroke-width="1" fill="none"/><circle cx="8" cy="4.7" r="1.7" stroke="#333" stroke-width="1.1" fill="none"/><path d="M5.4 10.9C2.4 11.3 0.3 12.2 0.3 13.25 0.3 14.6 3.7 15.6 8 15.6s7.7-1 7.7-2.35c0-1.05-2.1-1.95-5.1-2.35" stroke="#333" stroke-width="1" fill="none"/></svg>
<svg class="a" style="left:785px;top:238.30px;overflow:visible" width="16" height="16" viewBox="0 0 16 16"><circle cx="8" cy="8" r="7.6" stroke="#333" stroke-width="1" fill="none"/><path d="M8 5v6M5 8h6" stroke="#333" stroke-width="1.1"/></svg>
<svg class="a" style="left:814px;top:238.30px;overflow:visible" width="16" height="16" viewBox="0 0 16 16"><path d="M6.6 0.6H1.4v14.8h5.2" stroke="#333" stroke-width="1.1" fill="none"/><path d="M5 7.9h8.5" stroke="#444" stroke-width="1.2"/><path d="M11.8 5.2 14.6 7.9l-2.8 2.7" stroke="#333" stroke-width="1.2" fill="none"/></svg>
<div class="a" style="left:0;top:260.30px;width:842px;height:36px;background:#fff"></div>
<div class="a" style="left:8px;top:273.30px;width:0;height:0;border-top:5px solid transparent;border-bottom:5px solid transparent;border-left:9.5px solid #777"></div>
<div class="a" style="left:25px;top:270.30px;font-size:13.5px;line-height:16px;color:#707070">Plant #1480 - 786ef</div>
<div class="a" style="left:255px;top:270.30px;font-size:12.6px;line-height:16px;color:#767676">En línia</div>
<div class="a" style="left:324px;top:264.30px;font-size:12.7px;line-height:14px;color:#4e7595;transform:scaleX(0.998);transform-origin:0 0">Carrer de les Oliveres 666 - 08754 El Papiol - Catalunya -</div>
<div class="a" style="left:324px;top:278.30px;font-size:12.7px;line-height:14px;color:#4e7595;transform:scaleX(0.99);transform-origin:0 0">Espanya</div>
<div class="a" style="left:674px;top:270.30px;font-size:13.2px;line-height:16px;color:#7d7d7d">SMA</div>
<svg class="a" style="left:756px;top:270.30px;overflow:visible" width="16" height="16" viewBox="0 0 16 16"><path d="M8 12.6C5.6 9.6 3 6.6 3 4.9a5 5 0 0 1 10 0c0 1.7-2.6 4.7-5 7.7z" stroke="#333" stroke-width="1" fill="none"/><circle cx="8" cy="4.7" r="1.7" stroke="#333" stroke-width="1.1" fill="none"/><path d="M5.4 10.9C2.4 11.3 0.3 12.2 0.3 13.25 0.3 14.6 3.7 15.6 8 15.6s7.7-1 7.7-2.35c0-1.05-2.1-1.95-5.1-2.35" stroke="#333" stroke-width="1" fill="none"/></svg>
<svg class="a" style="left:785px;top:270.30px;overflow:visible" width="16" height="16" viewBox="0 0 16 16"><circle cx="8" cy="8" r="7.6" stroke="#333" stroke-width="1" fill="none"/><path d="M8 5v6M5 8h6" stroke="#333" stroke-width="1.1"/></svg>
<svg class="a" style="left:814px;top:270.30px;overflow:visible" width="16" height="16" viewBox="0 0 16 16"><path d="M6.6 0.6H1.4v14.8h5.2" stroke="#333" stroke-width="1.1" fill="none"/><path d="M5 7.9h8.5" stroke="#444" stroke-width="1.2"/><path d="M11.8 5.2 14.6 7.9l-2.8 2.7" stroke="#333" stroke-width="1.2" fill="none"/></svg>
<div class="a" style="left:0;top:296.30px;width:842px;height:36px;background:#f5f5f5"></div>
<div class="a" style="left:8px;top:309.30px;width:0;height:0;border-top:5px solid transparent;border-bottom:5px solid transparent;border-left:9.5px solid #777"></div>
<div class="a" style="left:25px;top:306.30px;font-size:13.5px;line-height:16px;color:#707070">Plant #1481 - 2f0a1</div>
<div class="a" style="left:255px;top:306.30px;font-size:12.6px;line-height:16px;color:#767676">En línia</div>
<div class="a" style="left:324px;top:300.30px;font-size:12.7px;line-height:14px;color:#4e7595;transform:scaleX(0.991);transform-origin:0 0">Carrer dels Avets, 123 - 08233 La Colònia Gall - Catalunya</div>
<div class="a" style="left:324px;top:314.30px;font-size:12.7px;line-height:14px;color:#4e7595;transform:scaleX(0.99);transform-origin:0 0">- España</div>
<div class="a" style="left:674px;top:306.30px;font-size:13.2px;line-height:16px;color:#7d7d7d">SolarEdge</div>
<svg class="a" style="left:756px;top:306.30px;overflow:visible" width="16" height="16" viewBox="0 0 16 16"><path d="M8 12.6C5.6 9.6 3 6.6 3 4.9a5 5 0 0 1 10 0c0 1.7-2.6 4.7-5 7.7z" stroke="#333" stroke-width="1" fill="none"/><circle cx="8" cy="4.7" r="1.7" stroke="#333" stroke-width="1.1" fill="none"/><path d="M5.4 10.9C2.4 11.3 0.3 12.2 0.3 13.25 0.3 14.6 3.7 15.6 8 15.6s7.7-1 7.7-2.35c0-1.05-2.1-1.95-5.1-2.35" stroke="#333" stroke-width="1" fill="none"/></svg>
<svg class="a" style="left:785px;top:306.30px;overflow:visible" width="16" height="16" viewBox="0 0 16 16"><circle cx="8" cy="8" r="7.6" stroke="#333" stroke-width="1" fill="none"/><path d="M8 5v6M5 8h6" stroke="#333" stroke-width="1.1"/></svg>
<svg class="a" style="left:814px;top:306.30px;overflow:visible" width="16" height="16" viewBox="0 0 16 16"><path d="M6.6 0.6H1.4v14.8h5.2" stroke="#333" stroke-width="1.1" fill="none"/><path d="M5 7.9h8.5" stroke="#444" stroke-width="1.2"/><path d="M11.8 5.2 14.6 7.9l-2.8 2.7" stroke="#333" stroke-width="1.2" fill="none"/></svg>
<div class="a" style="left:0;top:332.30px;width:842px;height:28px;background:#fff"></div>
<div class="a" style="left:8px;top:341.30px;width:0;height:0;border-top:5px solid transparent;border-bottom:5px solid transparent;border-left:9.5px solid #777"></div>
<div class="a" style="left:25px;top:338.30px;font-size:13.5px;line-height:16px;color:#707070">Plant #1482 - 1dd21</div>
<div class="a" style="left:255px;top:338.30px;font-size:12.6px;line-height:16px;color:#767676">En línia</div>
<div class="a" style="left:324px;top:338.30px;font-size:12.7px;line-height:16px;color:#4e7595;transform:scaleX(0.993);transform-origin:0 0">Carrer Xaloc 456 - 17740 Vilafant - Catalunya - Espanya</div>
<div class="a" style="left:674px;top:338.30px;font-size:13.2px;line-height:16px;color:#7d7d7d">SMA</div>
<svg class="a" style="left:756px;top:338.30px;overflow:visible" width="16" height="16" viewBox="0 0 16 16"><path d="M8 12.6C5.6 9.6 3 6.6 3 4.9a5 5 0 0 1 10 0c0 1.7-2.6 4.7-5 7.7z" stroke="#333" stroke-width="1" fill="none"/><circle cx="8" cy="4.7" r="1.7" stroke="#333" stroke-width="1.1" fill="none"/><path d="M5.4 10.9C2.4 11.3 0.3 12.2 0.3 13.25 0.3 14.6 3.7 15.6 8 15.6s7.7-1 7.7-2.35c0-1.05-2.1-1.95-5.1-2.35" stroke="#333" stroke-width="1" fill="none"/></svg>
<svg class="a" style="left:785px;top:338.30px;overflow:visible" width="16" height="16" viewBox="0 0 16 16"><circle cx="8" cy="8" r="7.6" stroke="#333" stroke-width="1" fill="none"/><path d="M8 5v6M5 8h6" stroke="#333" stroke-width="1.1"/></svg>
<svg class="a" style="left:814px;top:338.30px;overflow:visible" width="16" height="16" viewBox="0 0 16 16"><path d="M6.6 0.6H1.4v14.8h5.2" stroke="#333" stroke-width="1.1" fill="none"/><path d="M5 7.9h8.5" stroke="#444" stroke-width="1.2"/><path d="M11.8 5.2 14.6 7.9l-2.8 2.7" stroke="#333" stroke-width="1.2" fill="none"/></svg>
<div class="a" style="left:0;top:360.30px;width:842px;height:36px;background:#f5f5f5"></div>
<div class="a" style="left:8px;top:373.30px;width:0;height:0;border-top:5px solid transparent;border-bottom:5px solid transparent;border-left:9.5px solid #777"></div>
<div class="a" style="left:25px;top:370.30px;font-size:13.5px;line-height:16px;color:#707070">Plant #1483 - 922ce</div>
<div class="a" style="left:255px;top:370.30px;font-size:12.6px;line-height:16px;color:#767676">En línia</div>
<div class="a" style="left:324px;top:364.30px;font-size:12.7px;line-height:14px;color:#4e7595;transform:scaleX(0.987);transform-origin:0 0">Carrer de Pompeu Fabra, 789 - 08195 Sant Cugat del</div>
<div class="a" style="left:324px;top:378.30px;font-size:12.7px;line-height:14px;color:#4e7595;transform:scaleX(0.99);transform-origin:0 0">Vallès - Catalunya - España</div>
<div class="a" style="left:674px;top:370.30px;font-size:13.2px;line-height:16px;color:#7d7d7d">Fronius</div>
<svg class="a" style="left:756px;top:370.30px;overflow:visible" width="16" height="16" viewBox="0 0 16 16"><path d="M8 12.6C5.6 9.6 3 6.6 3 4.9a5 5 0 0 1 10 0c0 1.7-2.6 4.7-5 7.7z" stroke="#333" stroke-width="1" fill="none"/><circle cx="8" cy="4.7" r="1.7" stroke="#333" stroke-width="1.1" fill="none"/><path d="M5.4 10.9C2.4 11.3 0.3 12.2 0.3 13.25 0.3 14.6 3.7 15.6 8 15.6s7.7-1 7.7-2.35c0-1.05-2.1-1.95-5.1-2.35" stroke="#333" stroke-width="1" fill="none"/></svg>
<svg class="a" style="left:785px;top:370.30px;overflow:visible" width="16" height="16" viewBox="0 0 16 16"><circle cx="8" cy="8" r="7.6" stroke="#333" stroke-width="1" fill="none"/><path d="M8 5v6M5 8h6" stroke="#333" stroke-width="1.1"/></svg>
<svg class="a" style="left:814px;top:370.30px;overflow:visible" width="16" height="16" viewBox="0 0 16 16"><path d="M6.6 0.6H1.4v14.8h5.2" stroke="#333" stroke-width="1.1" fill="none"/><path d="M5 7.9h8.5" stroke="#444" stroke-width="1.2"/><path d="M11.8 5.2 14.6 7.9l-2.8 2.7" stroke="#333" stroke-width="1.2" fill="none"/></svg>
<div class="a" style="left:0;top:396.30px;width:842px;height:28px;background:#fff"></div>
<div class="a" style="left:8px;top:405.30px;width:0;height:0;border-top:5px solid transparent;border-bottom:5px solid transparent;border-left:9.5px solid #777"></div>
<div class="a" style="left:25px;top:402.30px;font-size:13.5px;line-height:16px;color:#707070">Plant #1484 - 9b4da</div>
<div class="a" style="left:255px;top:402.30px;font-size:12.6px;line-height:16px;color:#767676">En línia</div>
<div class="a" style="left:324px;top:402.30px;font-size:12.7px;line-height:16px;color:#4e7595;transform:scaleX(0.982);transform-origin:0 0">Carrer Aigua 1212 - 25753 Sanaüja - Catalunya - Espanya</div>
<div class="a" style="left:674px;top:402.30px;font-size:13.2px;line-height:16px;color:#7d7d7d">Fronius</div>
<svg class="a" style="left:756px;top:402.30px;overflow:visible" width="16" height="16" viewBox="0 0 16 16"><path d="M8 12.6C5.6 9.6 3 6.6 3 4.9a5 5 0 0 1 10 0c0 1.7-2.6 4.7-5 7.7z" stroke="#333" stroke-width="1" fill="none"/><circle cx="8" cy="4.7" r="1.7" stroke="#333" stroke-width="1.1" fill="none"/><path d="M5.4 10.9C2.4 11.3 0.3 12.2 0.3 13.25 0.3 14.6 3.7 15.6 8 15.6s7.7-1 7.7-2.35c0-1.05-2.1-1.95-5.1-2.35" stroke="#333" stroke-width="1" fill="none"/></svg>
<svg class="a" style="left:785px;top:402.30px;overflow:visible" width="16" height="16" viewBox="0 0 16 16"><circle cx="8" cy="8" r="7.6" stroke="#333" stroke-width="1" fill="none"/><path d="M8 5v6M5 8h6" stroke="#333" stroke-width="1.1"/></svg>
<svg class="a" style="left:814px;top:402.30px;overflow:visible" width="16" height="16" viewBox="0 0 16 16"><path d="M6.6 0.6H1.4v14.8h5.2" stroke="#333" stroke-width="1.1" fill="none"/><path d="M5 7.9h8.5" stroke="#444" stroke-width="1.2"/><path d="M11.8 5.2 14.6 7.9l-2.8 2.7" stroke="#333" stroke-width="1.2" fill="none"/></svg>
<div class="a" style="left:0;top:424.30px;width:842px;height:28px;background:#f5f5f5"></div>
<div class="a" style="left:8px;top:433.30px;width:0;height:0;border-top:5px solid transparent;border-bottom:5px solid transparent;border-left:9.5px solid #777"></div>
<div class="a" style="left:25px;top:430.30px;font-size:13.5px;line-height:16px;color:#707070">Plant #1485 - 473b7</div>
<div class="a" style="left:255px;top:430.30px;font-size:12.6px;line-height:16px;color:#767676">En línia</div>
<div class="a" style="left:324px;top:430.30px;font-size:12.7px;line-height:16px;color:#4e7595;transform:scaleX(0.978);transform-origin:0 0">La Carrera - 17176 Joanetes - Catalunya - Espanya</div>
<div class="a" style="left:674px;top:430.30px;font-size:13.2px;line-height:16px;color:#7d7d7d">SunGrow</div>
<svg class="a" style="left:756px;top:430.30px;overflow:visible" width="16" height="16" viewBox="0 0 16 16"><path d="M8 12.6C5.6 9.6 3 6.6 3 4.9a5 5 0 0 1 10 0c0 1.7-2.6 4.7-5 7.7z" stroke="#333" stroke-width="1" fill="none"/><circle cx="8" cy="4.7" r="1.7" stroke="#333" stroke-width="1.1" fill="none"/><path d="M5.4 10.9C2.4 11.3 0.3 12.2 0.3 13.25 0.3 14.6 3.7 15.6 8 15.6s7.7-1 7.7-2.35c0-1.05-2.1-1.95-5.1-2.35" stroke="#333" stroke-width="1" fill="none"/></svg>
<svg class="a" style="left:785px;top:430.30px;overflow:visible" width="16" height="16" viewBox="0 0 16 16"><circle cx="8" cy="8" r="7.6" stroke="#333" stroke-width="1" fill="none"/><path d="M8 5v6M5 8h6" stroke="#333" stroke-width="1.1"/></svg>
<svg class="a" style="left:814px;top:430.30px;overflow:visible" width="16" height="16" viewBox="0 0 16 16"><path d="M6.6 0.6H1.4v14.8h5.2" stroke="#333" stroke-width="1.1" fill="none"/><path d="M5 7.9h8.5" stroke="#444" stroke-width="1.2"/><path d="M11.8 5.2 14.6 7.9l-2.8 2.7" stroke="#333" stroke-width="1.2" fill="none"/></svg>
<div class="a" style="left:0;top:452.30px;width:842px;height:28px;background:#fff"></div>
<div class="a" style="left:8px;top:461.30px;width:0;height:0;border-top:5px solid transparent;border-bottom:5px solid transparent;border-left:9.5px solid #777"></div>
<div class="a" style="left:25px;top:458.30px;font-size:13.5px;line-height:16px;color:#707070">Plant #1486 - 93fa1</div>
<div class="a" style="left:255px;top:458.30px;font-size:12.6px;line-height:16px;color:#767676">En línia</div>
<div class="a" style="left:324px;top:458.30px;font-size:12.7px;line-height:16px;color:#4e7595;transform:scaleX(0.978);transform-origin:0 0">La Carrera - 17176 Joanetes - Catalunya - Espanya</div>
<div class="a" style="left:674px;top:458.30px;font-size:13.2px;line-height:16px;color:#7d7d7d">SMA</div>
<svg class="a" style="left:756px;top:458.30px;overflow:visible" width="16" height="16" viewBox="0 0 16 16"><path d="M8 12.6C5.6 9.6 3 6.6 3 4.9a5 5 0 0 1 10 0c0 1.7-2.6 4.7-5 7.7z" stroke="#333" stroke-width="1" fill="none"/><circle cx="8" cy="4.7" r="1.7" stroke="#333" stroke-width="1.1" fill="none"/><path d="M5.4 10.9C2.4 11.3 0.3 12.2 0.3 13.25 0.3 14.6 3.7 15.6 8 15.6s7.7-1 7.7-2.35c0-1.05-2.1-1.95-5.1-2.35" stroke="#333" stroke-width="1" fill="none"/></svg>
<svg class="a" style="left:785px;top:458.30px;overflow:visible" width="16" height="16" viewBox="0 0 16 16"><circle cx="8" cy="8" r="7.6" stroke="#333" stroke-width="1" fill="none"/><path d="M8 5v6M5 8h6" stroke="#333" stroke-width="1.1"/></svg>
<svg class="a" style="left:814px;top:458.30px;overflow:visible" width="16" height="16" viewBox="0 0 16 16"><path d="M6.6 0.6H1.4v14.8h5.2" stroke="#333" stroke-width="1.1" fill="none"/><path d="M5 7.9h8.5" stroke="#444" stroke-width="1.2"/><path d="M11.8 5.2 14.6 7.9l-2.8 2.7" stroke="#333" stroke-width="1.2" fill="none"/></svg>
<div class="a" style="left:0;top:480.30px;width:842px;height:36px;background:#f5f5f5"></div>
<div class="a" style="left:8px;top:493.30px;width:0;height:0;border-top:5px solid transparent;border-bottom:5px solid transparent;border-left:9.5px solid #777"></div>
<div class="a" style="left:25px;top:490.30px;font-size:13.5px;line-height:16px;color:#707070">Plant #1487 - 49152</div>
<div class="a" style="left:255px;top:490.30px;font-size:12.6px;line-height:16px;color:#767676">En línia</div>
<div class="a" style="left:324px;top:484.30px;font-size:12.7px;line-height:14px;color:#4e7595;transform:scaleX(0.997);transform-origin:0 0">Vial Camino 0 - 17869 Vilallonga de Ter - Cataluña -</div>
<div class="a" style="left:324px;top:498.30px;font-size:12.7px;line-height:14px;color:#4e7595;transform:scaleX(0.99);transform-origin:0 0">Espanya</div>
<div class="a" style="left:674px;top:490.30px;font-size:13.2px;line-height:16px;color:#7d7d7d">SunGrow</div>
<svg class="a" style="left:756px;top:490.30px;overflow:visible" width="16" height="16" viewBox="0 0 16 16"><path d="M8 12.6C5.6 9.6 3 6.6 3 4.9a5 5 0 0 1 10 0c0 1.7-2.6 4.7-5 7.7z" stroke="#333" stroke-width="1" fill="none"/><circle cx="8" cy="4.7" r="1.7" stroke="#333" stroke-width="1.1" fill="none"/><path d="M5.4 10.9C2.4 11.3 0.3 12.2 0.3 13.25 0.3 14.6 3.7 15.6 8 15.6s7.7-1 7.7-2.35c0-1.05-2.1-1.95-5.1-2.35" stroke="#333" stroke-width="1" fill="none"/></svg>
<svg class="a" style="left:785px;top:490.30px;overflow:visible" width="16" height="16" viewBox="0 0 16 16"><circle cx="8" cy="8" r="7.6" stroke="#333" stroke-width="1" fill="none"/><path d="M8 5v6M5 8h6" stroke="#333" stroke-width="1.1"/></svg>
<svg class="a" style="left:814px;top:490.30px;overflow:visible" width="16" height="16" viewBox="0 0 16 16"><path d="M6.6 0.6H1.4v14.8h5.2" stroke="#333" stroke-width="1.1" fill="none"/><path d="M5 7.9h8.5" stroke="#444" stroke-width="1.2"/><path d="M11.8 5.2 14.6 7.9l-2.8 2.7" stroke="#333" stroke-width="1.2" fill="none"/></svg>
<div class="a" style="left:0;top:516.30px;width:842px;height:28px;background:#fff"></div>
<div class="a" style="left:8px;top:525.30px;width:0;height:0;border-top:5px solid transparent;border-bottom:5px solid transparent;border-left:9.5px solid #777"></div>
<div class="a" style="left:25px;top:522.30px;font-size:13.5px;line-height:16px;color:#707070">Plant #1488 - a7885</div>
<div class="a" style="left:255px;top:522.30px;font-size:12.6px;line-height:16px;color:#767676">En línia</div>
<div class="a" style="left:674px;top:522.30px;font-size:13.2px;line-height:16px;color:#7d7d7d">Salicru</div>
<svg class="a" style="left:771px;top:522.30px;overflow:visible" width="16" height="16" viewBox="0 0 16 16"><path d="M8 12.6C5.6 9.6 3 6.6 3 4.9a5 5 0 0 1 10 0c0 1.7-2.6 4.7-5 7.7z" stroke="#333" stroke-width="1" fill="none"/><circle cx="8" cy="4.7" r="1.7" stroke="#333" stroke-width="1.1" fill="none"/><path d="M5.4 10.9C2.4 11.3 0.3 12.2 0.3 13.25 0.3 14.6 3.7 15.6 8 15.6s7.7-1 7.7-2.35c0-1.05-2.1-1.95-5.1-2.35" stroke="#333" stroke-width="1" fill="none"/></svg>
<svg class="a" style="left:800px;top:522.30px;overflow:visible" width="16" height="16" viewBox="0 0 16 16"><path d="M6.6 0.6H1.4v14.8h5.2" stroke="#333" stroke-width="1.1" fill="none"/><path d="M5 7.9h8.5" stroke="#444" stroke-width="1.2"/><path d="M11.8 5.2 14.6 7.9l-2.8 2.7" stroke="#333" stroke-width="1.2" fill="none"/></svg>
<div class="a" style="left:0;top:544.30px;width:842px;height:39.3px;background:#f5f5f5"></div>
<div class="a" style="left:8px;top:558.95px;width:0;height:0;border-top:5px solid transparent;border-bottom:5px solid transparent;border-left:9.5px solid #777"></div>
<div class="a" style="left:25px;top:555.95px;font-size:13.5px;line-height:16px;color:#707070">Plant #1489 - 2a37d</div>
<div class="a" style="left:255px;top:547.95px;font-size:12.6px;line-height:16px;color:#767676;white-space:normal;width:60px">Fora de<br>línia</div>
<div class="a" style="left:674px;top:555.95px;font-size:13.2px;line-height:16px;color:#7d7d7d">Datadis</div>
<svg class="a" style="left:771px;top:555.95px;overflow:visible" width="16" height="16" viewBox="0 0 16 16"><path d="M8 12.6C5.6 9.6 3 6.6 3 4.9a5 5 0 0 1 10 0c0 1.7-2.6 4.7-5 7.7z" stroke="#333" stroke-width="1" fill="none"/><circle cx="8" cy="4.7" r="1.7" stroke="#333" stroke-width="1.1" fill="none"/><path d="M5.4 10.9C2.4 11.3 0.3 12.2 0.3 13.25 0.3 14.6 3.7 15.6 8 15.6s7.7-1 7.7-2.35c0-1.05-2.1-1.95-5.1-2.35" stroke="#333" stroke-width="1" fill="none"/></svg>
<svg class="a" style="left:800px;top:555.95px;overflow:visible" width="16" height="16" viewBox="0 0 16 16"><path d="M6.6 0.6H1.4v14.8h5.2" stroke="#333" stroke-width="1.1" fill="none"/><path d="M5 7.9h8.5" stroke="#444" stroke-width="1.2"/><path d="M11.8 5.2 14.6 7.9l-2.8 2.7" stroke="#333" stroke-width="1.2" fill="none"/></svg>
<div class="a" style="left:0;top:583.60px;width:842px;height:28px;background:#fff"></div>
<div class="a" style="left:8px;top:592.60px;width:0;height:0;border-top:5px solid transparent;border-bottom:5px solid transparent;border-left:9.5px solid #777"></div>
<div class="a" style="left:25px;top:589.60px;font-size:13.5px;line-height:16px;color:#707070">Plant #1490 - 58773</div>
<div class="a" style="left:255px;top:589.60px;font-size:12.6px;line-height:16px;color:#767676">En línia</div>
<div class="a" style="left:324px;top:589.60px;font-size:12.7px;line-height:16px;color:#4e7595;transform:scaleX(0.97);transform-origin:0 0">Carrer Montserrat Roig, 111, 08270, Barcelona, España</div>
<div class="a" style="left:674px;top:589.60px;font-size:13.2px;line-height:16px;color:#7d7d7d">Ingeteam</div>
<svg class="a" style="left:756px;top:589.60px;overflow:visible" width="16" height="16" viewBox="0 0 16 16"><path d="M8 12.6C5.6 9.6 3 6.6 3 4.9a5 5 0 0 1 10 0c0 1.7-2.6 4.7-5 7.7z" stroke="#333" stroke-width="1" fill="none"/><circle cx="8" cy="4.7" r="1.7" stroke="#333" stroke-width="1.1" fill="none"/><path d="M5.4 10.9C2.4 11.3 0.3 12.2 0.3 13.25 0.3 14.6 3.7 15.6 8 15.6s7.7-1 7.7-2.35c0-1.05-2.1-1.95-5.1-2.35" stroke="#333" stroke-width="1" fill="none"/></svg>
<svg class="a" style="left:785px;top:589.60px;overflow:visible" width="16" height="16" viewBox="0 0 16 16"><circle cx="8" cy="8" r="7.6" stroke="#333" stroke-width="1" fill="none"/><path d="M8 5v6M5 8h6" stroke="#333" stroke-width="1.1"/></svg>
<svg class="a" style="left:814px;top:589.60px;overflow:visible" width="16" height="16" viewBox="0 0 16 16"><path d="M6.6 0.6H1.4v14.8h5.2" stroke="#333" stroke-width="1.1" fill="none"/><path d="M5 7.9h8.5" stroke="#444" stroke-width="1.2"/><path d="M11.8 5.2 14.6 7.9l-2.8 2.7" stroke="#333" stroke-width="1.2" fill="none"/></svg>
<div class="a" style="left:0;top:611.60px;width:842px;height:39.3px;background:#f5f5f5"></div>
<div class="a" style="left:8px;top:626.25px;width:0;height:0;border-top:5px solid transparent;border-bottom:5px solid transparent;border-left:9.5px solid #777"></div>
<div class="a" style="left:25px;top:623.25px;font-size:13.5px;line-height:16px;color:#707070">Plant #1491 - 2ccf7</div>
<div class="a" style="left:255px;top:615.25px;font-size:12.6px;line-height:16px;color:#767676;white-space:normal;width:60px">Fora de<br>línia</div>
<div class="a" style="left:674px;top:623.25px;font-size:13.2px;line-height:16px;color:#7d7d7d">Datadis</div>
<svg class="a" style="left:771px;top:623.25px;overflow:visible" width="16" height="16" viewBox="0 0 16 16"><path d="M8 12.6C5.6 9.6 3 6.6 3 4.9a5 5 0 0 1 10 0c0 1.7-2.6 4.7-5 7.7z" stroke="#333" stroke-width="1" fill="none"/><circle cx="8" cy="4.7" r="1.7" stroke="#333" stroke-width="1.1" fill="none"/><path d="M5.4 10.9C2.4 11.3 0.3 12.2 0.3 13.25 0.3 14.6 3.7 15.6 8 15.6s7.7-1 7.7-2.35c0-1.05-2.1-1.95-5.1-2.35" stroke="#333" stroke-width="1" fill="none"/></svg>
<svg class="a" style="left:800px;top:623.25px;overflow:visible" width="16" height="16" viewBox="0 0 16 16"><path d="M6.6 0.6H1.4v14.8h5.2" stroke="#333" stroke-width="1.1" fill="none"/><path d="M5 7.9h8.5" stroke="#444" stroke-width="1.2"/><path d="M11.8 5.2 14.6 7.9l-2.8 2.7" stroke="#333" stroke-width="1.2" fill="none"/></svg>
<div class="a" style="left:0;top:650.90px;width:842px;height:39.3px;background:#fff"></div>
<div class="a" style="left:8px;top:665.55px;width:0;height:0;border-top:5px solid transparent;border-bottom:5px solid transparent;border-left:9.5px solid #777"></div>
<div class="a" style="left:25px;top:662.55px;font-size:13.5px;line-height:16px;color:#707070">Plant #1492 - 56528</div>
<div class="a" style="left:255px;top:654.55px;font-size:12.6px;line-height:16px;color:#767676;white-space:normal;width:60px">Fora de<br>línia</div>
<div class="a" style="left:324px;top:656.55px;font-size:12.7px;line-height:14px;color:#4e7595;transform:scaleX(1.009);transform-origin:0 0">Carrer la Noguera 333 - 08783 Masquefa - Catalunya -</div>
<div class="a" style="left:324px;top:670.55px;font-size:12.7px;line-height:14px;color:#4e7595;transform:scaleX(0.99);transform-origin:0 0">Espanya</div>
<div class="a" style="left:674px;top:662.55px;font-size:13.2px;line-height:16px;color:#7d7d7d">Victron</div>
<svg class="a" style="left:756px;top:662.55px;overflow:visible" width="16" height="16" viewBox="0 0 16 16"><path d="M8 12.6C5.6 9.6 3 6.6 3 4.9a5 5 0 0 1 10 0c0 1.7-2.6 4.7-5 7.7z" stroke="#333" stroke-width="1" fill="none"/><circle cx="8" cy="4.7" r="1.7" stroke="#333" stroke-width="1.1" fill="none"/><path d="M5.4 10.9C2.4 11.3 0.3 12.2 0.3 13.25 0.3 14.6 3.7 15.6 8 15.6s7.7-1 7.7-2.35c0-1.05-2.1-1.95-5.1-2.35" stroke="#333" stroke-width="1" fill="none"/></svg>
<svg class="a" style="left:785px;top:662.55px;overflow:visible" width="16" height="16" viewBox="0 0 16 16"><circle cx="8" cy="8" r="7.6" stroke="#333" stroke-width="1" fill="none"/><path d="M8 5v6M5 8h6" stroke="#333" stroke-width="1.1"/></svg>
<svg class="a" style="left:814px;top:662.55px;overflow:visible" width="16" height="16" viewBox="0 0 16 16"><path d="M6.6 0.6H1.4v14.8h5.2" stroke="#333" stroke-width="1.1" fill="none"/><path d="M5 7.9h8.5" stroke="#444" stroke-width="1.2"/><path d="M11.8 5.2 14.6 7.9l-2.8 2.7" stroke="#333" stroke-width="1.2" fill="none"/></svg>
<div class="a" style="left:0;top:690.20px;width:842px;height:28px;background:#f5f5f5"></div>
<div class="a" style="left:8px;top:699.20px;width:0;height:0;border-top:5px solid transparent;border-bottom:5px solid transparent;border-left:9.5px solid #777"></div>
<div class="a" style="left:25px;top:696.20px;font-size:13.5px;line-height:16px;color:#707070">Plant #1493 - 55e5b</div>
<div class="a" style="left:255px;top:696.20px;font-size:12.6px;line-height:16px;color:#767676">En línia</div>
<div class="a" style="left:674px;top:696.20px;font-size:13.2px;line-height:16px;color:#7d7d7d">SMA</div>
<svg class="a" style="left:771px;top:696.20px;overflow:visible" width="16" height="16" viewBox="0 0 16 16"><path d="M8 12.6C5.6 9.6 3 6.6 3 4.9a5 5 0 0 1 10 0c0 1.7-2.6 4.7-5 7.7z" stroke="#333" stroke-width="1" fill="none"/><circle cx="8" cy="4.7" r="1.7" stroke="#333" stroke-width="1.1" fill="none"/><path d="M5.4 10.9C2.4 11.3 0.3 12.2 0.3 13.25 0.3 14.6 3.7 15.6 8 15.6s7.7-1 7.7-2.35c0-1.05-2.1-1.95-5.1-2.35" stroke="#333" stroke-width="1" fill="none"/></svg>
<svg class="a" style="left:800px;top:696.20px;overflow:visible" width="16" height="16" viewBox="0 0 16 16"><path d="M6.6 0.6H1.4v14.8h5.2" stroke="#333" stroke-width="1.1" fill="none"/><path d="M5 7.9h8.5" stroke="#444" stroke-width="1.2"/><path d="M11.8 5.2 14.6 7.9l-2.8 2.7" stroke="#333" stroke-width="1.2" fill="none"/></svg>
<div class="a" style="left:0;top:718.20px;width:842px;height:36px;background:#fff"></div>
<div class="a" style="left:8px;top:731.20px;width:0;height:0;border-top:5px solid transparent;border-bottom:5px solid transparent;border-left:9.5px solid #777"></div>
<div class="a" style="left:25px;top:728.20px;font-size:13.5px;line-height:16px;color:#707070">Plant #1494 - 5ab75</div>
<div class="a" style="left:255px;top:728.20px;font-size:12.6px;line-height:16px;color:#767676">En línia</div>
<div class="a" style="left:324px;top:722.20px;font-size:12.7px;line-height:14px;color:#4e7595;transform:scaleX(0.968);transform-origin:0 0">Carrer de Balmes 1111 - 08172 Sant Cugat del Vallès -</div>
<div class="a" style="left:324px;top:736.20px;font-size:12.7px;line-height:14px;color:#4e7595;transform:scaleX(0.99);transform-origin:0 0">Catalunya - Espanya</div>
<div class="a" style="left:674px;top:728.20px;font-size:13.2px;line-height:16px;color:#7d7d7d">Ingeteam</div>
<svg class="a" style="left:756px;top:728.20px;overflow:visible" width="16" height="16" viewBox="0 0 16 16"><path d="M8 12.6C5.6 9.6 3 6.6 3 4.9a5 5 0 0 1 10 0c0 1.7-2.6 4.7-5 7.7z" stroke="#333" stroke-width="1" fill="none"/><circle cx="8" cy="4.7" r="1.7" stroke="#333" stroke-width="1.1" fill="none"/><path d="M5.4 10.9C2.4 11.3 0.3 12.2 0.3 13.25 0.3 14.6 3.7 15.6 8 15.6s7.7-1 7.7-2.35c0-1.05-2.1-1.95-5.1-2.35" stroke="#333" stroke-width="1" fill="none"/></svg>
<svg class="a" style="left:785px;top:728.20px;overflow:visible" width="16" height="16" viewBox="0 0 16 16"><circle cx="8" cy="8" r="7.6" stroke="#333" stroke-width="1" fill="none"/><path d="M8 5v6M5 8h6" stroke="#333" stroke-width="1.1"/></svg>
<svg class="a" style="left:814px;top:728.20px;overflow:visible" width="16" height="16" viewBox="0 0 16 16"><path d="M6.6 0.6H1.4v14.8h5.2" stroke="#333" stroke-width="1.1" fill="none"/><path d="M5 7.9h8.5" stroke="#444" stroke-width="1.2"/><path d="M11.8 5.2 14.6 7.9l-2.8 2.7" stroke="#333" stroke-width="1.2" fill="none"/></svg>
</div>
<div class="a" style="left:1867px;top:268px;width:15px;height:744px;background:#fafafa"></div>
<div class="a" style="left:1870px;top:273px;width:0;height:0;border-left:4.5px solid transparent;border-right:4.5px solid transparent;border-bottom:7px solid #777"></div>
<div class="a" style="left:1870px;top:286px;width:9px;height:99px;border-radius:5px;background:#8a8a8a"></div>
<div class="a" style="left:1840px;top:1000px;width:60px;height:60px;border-radius:50%;background:#007bff;box-shadow:0 4px 12px rgba(0,0,0,.28);color:#fff;font-size:18px;text-align:center;line-height:60px">Chat</div></body></html>
